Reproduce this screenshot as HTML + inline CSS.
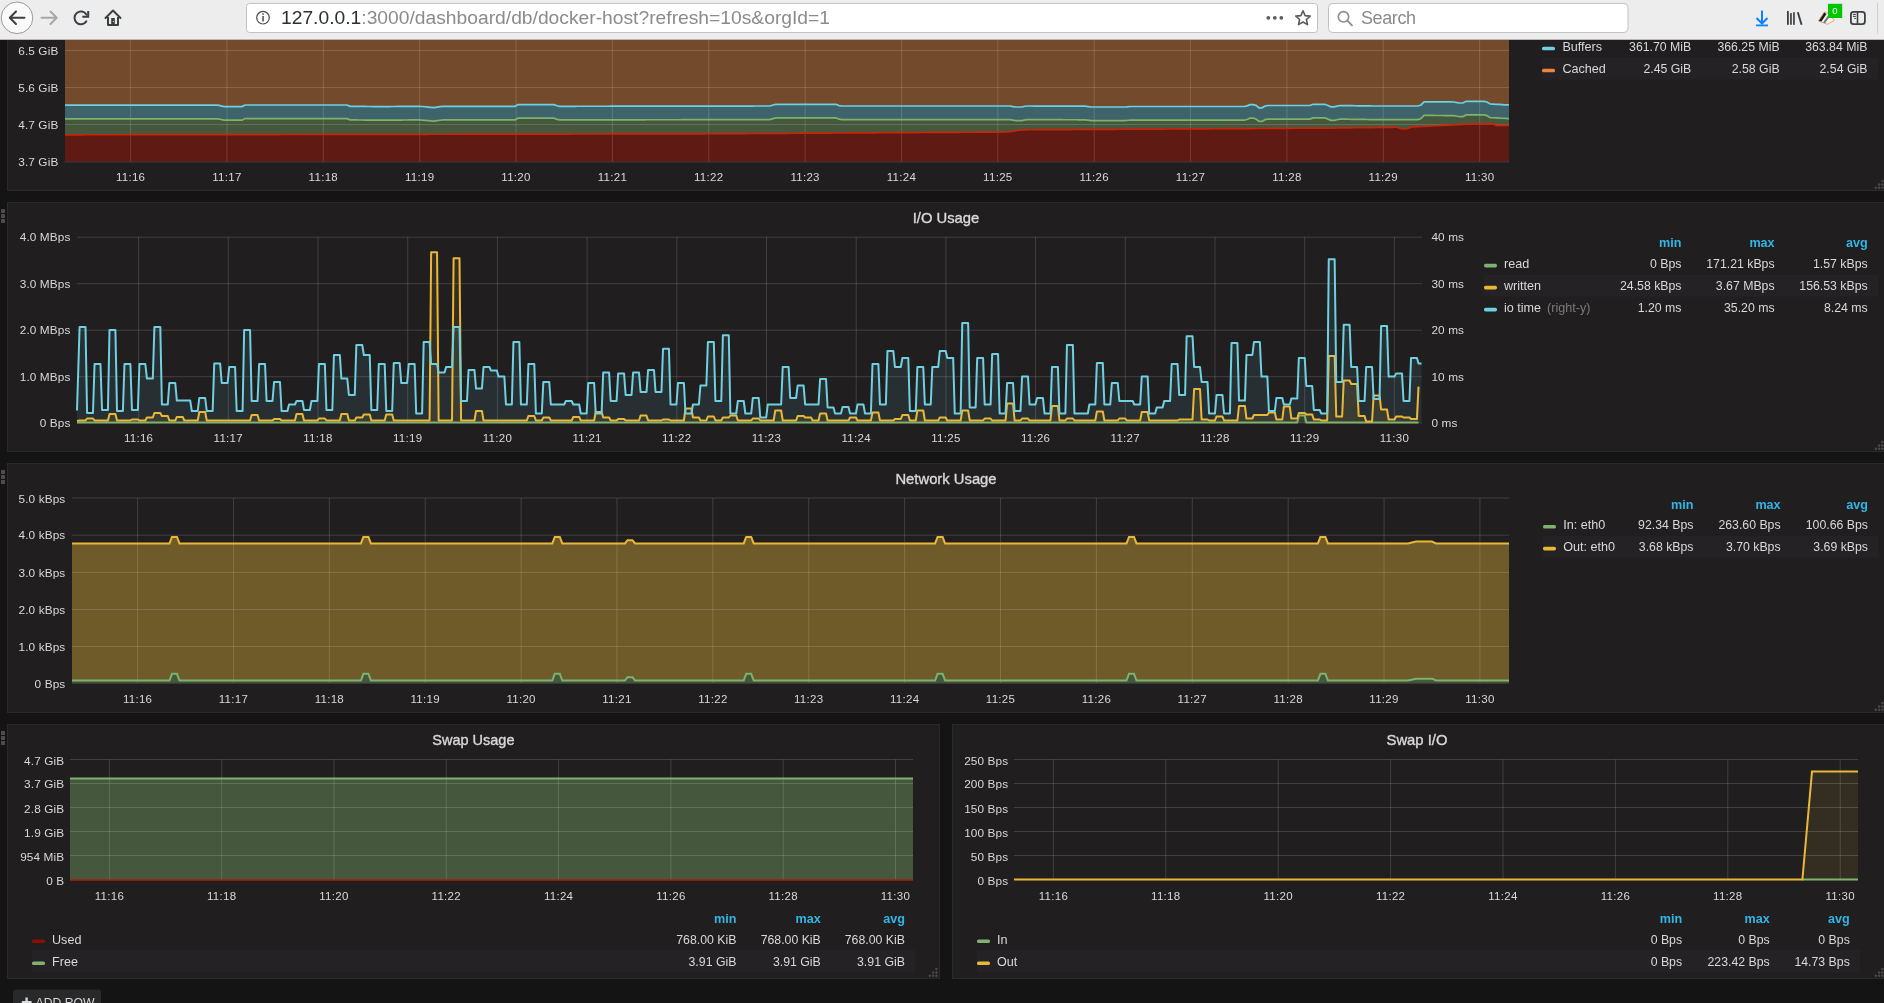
<!DOCTYPE html>
<html><head><meta charset="utf-8"><title>Grafana - Docker Host</title>
<style>
html,body{margin:0;padding:0;width:1884px;height:1003px;overflow:hidden;background:#141414;font-family:'Liberation Sans', sans-serif;}
</style></head><body>
<svg width="1884" height="963" viewBox="0 40 1884 963" style="position:absolute;left:0;top:40px;font-family:'Liberation Sans', sans-serif;will-change:transform">
<rect x="0" y="40" width="1884" height="1003" fill="#141414"/>
<rect x="7" y="-100" width="1994" height="291" fill="#2a2a2a"/>
<rect x="8" y="-99" width="1992" height="289" fill="#201e1f"/>
<circle cx="1882.4" cy="187.7" r="1.25" fill="#4a4a4a"/>
<circle cx="1879.1" cy="187.7" r="1.25" fill="#4a4a4a"/>
<circle cx="1875.8" cy="187.7" r="1.25" fill="#4a4a4a"/>
<circle cx="1882.4" cy="184.4" r="1.25" fill="#4a4a4a"/>
<circle cx="1879.1" cy="184.4" r="1.25" fill="#4a4a4a"/>
<circle cx="1882.4" cy="181.1" r="1.25" fill="#4a4a4a"/>
<rect x="65" y="40" width="1444" height="122" fill="#734a2b"/>
<polygon points="65,162 65,105.2 68,105.2 71,105.2 74,105.2 77,105.2 80,105.2 83,105.2 86,105.2 89,105.2 92,105.2 95,105.2 98,105.2 101,105.2 104,105.2 107,105.2 110,105.2 113,105.2 116,105.2 119,105.2 122,105.2 125,105.2 128,105.2 131,105.2 134,105.2 137,105.2 140,105.2 143,105.2 146,105.2 149,105.2 152,105.2 155,105.2 158,105.2 161,105.2 164,105.2 167,105.2 170,105.2 173,105.2 176,105.2 179,105.2 182,105.2 185,105.2 188,105.2 191,105.2 194,105.2 197,105.2 200,105.2 203,105.2 206,105.2 209,105.2 212,105.2 215,105.2 218,105.2 221,105.9 224,106.6 227,106.6 230,106.6 233,106.6 236,106.6 239,106.6 242,106.6 245,105 248,105 251,105 254,105 257,105 260,105 263,105 266,105 269,105 272,105 275,105 278,105 281,105 284,105 287,105 290,105 293,105 296,105 299,105 302,105 305,105 308,105 311,105 314,105 317,105 320,105 323,105 326,105 329,105 332,105 335,105 338,105 341,105 344,105 347,105 350,106.3 353,106.33 356,106.36 359,106.39 362,106.42 365,106.45 368,106.48 371,106.51 374,106.54 377,106.57 380,106.6 383,106.58 386,106.55 389,106.53 392,106.51 395,106.49 398,106.46 401,106.44 404,106.42 407,106.4 410,106.38 413,106.35 416,106.33 419,106.31 422,106.49 425,106.76 428,107.04 431,107.32 434,107.6 437,107.11 440,106.62 443,106.3 446,106.3 449,106.3 452,106.3 455,106.3 458,106.3 461,106.3 464,106.3 467,106.3 470,106.3 473,106.3 476,106.3 479,106.3 482,106.3 485,106.3 488,106.3 491,106.3 494,106.3 497,106.3 500,106.3 503,106.3 506,106.3 509,106.3 512,106.3 515,106.3 518,104.6 521,104.6 524,104.6 527,104.6 530,104.6 533,104.6 536,104.6 539,104.6 542,104.6 545,104.6 548,104.6 551,104.6 554,104.6 557,105.73 560,106.3 563,106.29 566,106.29 569,106.28 572,106.28 575,106.28 578,106.27 581,106.27 584,106.26 587,106.26 590,106.25 593,106.25 596,106.25 599,106.24 602,106.24 605,106.23 608,106.23 611,106.22 614,106.22 617,106.22 620,106.21 623,106.21 626,106.2 629,106.2 632,106.2 635,106.19 638,106.19 641,106.18 644,106.18 647,106.17 650,106.17 653,106.17 656,106.16 659,106.16 662,106.15 665,106.15 668,106.14 671,106.14 674,106.14 677,106.13 680,106.13 683,106.12 686,106.12 689,106.11 692,106.11 695,106.11 698,106.1 701,106.1 704,106.09 707,106.09 710,106.08 713,106.08 716,106.08 719,106.07 722,106.07 725,106.06 728,106.06 731,106.06 734,106.05 737,106.05 740,106.04 743,106.04 746,106.03 749,106.03 752,106.03 755,106.02 758,106.02 761,106.01 764,106.01 767,106 770,106 773,104.98 776,104.3 779,104.3 782,104.3 785,104.3 788,104.3 791,104.3 794,104.3 797,104.3 800,104.3 803,104.3 806,104.3 809,104.3 812,104.3 815,104.3 818,104.3 821,104.3 824,104.3 827,104.3 830,104.3 833,104.3 836,104.3 839,105.58 842,106 845,106 848,106 851,106 854,106 857,106 860,106 863,106 866,106 869,106 872,106 875,106 878,106 881,106 884,106 887,106 890,106 893,106 896,106 899,106 902,106 905,106 908,106 911,106 914,106 917,106 920,106 923,106 926,106 929,106 932,106 935,106 938,106 941,106 944,106 947,106 950,106 953,106 956,106 959,106 962,106 965,106 968,106 971,106 974,106 977,106 980,106 983,106 986,106 989,106 992,106 995,106 998,106 1001,106 1004,106 1007,106 1010,106 1013,106.6 1016,107 1019,107 1022,107 1025,106.25 1028,106.01 1031,106.02 1034,106.03 1037,106.04 1040,106.05 1043,106.06 1046,106.07 1049,106.08 1052,106.09 1055,106.1 1058,106.11 1061,106.12 1064,106.13 1067,106.14 1070,106.15 1073,106.16 1076,106.17 1079,106.18 1082,106.19 1085,106.2 1088,106.6 1091,107 1094,107 1097,107 1100,107 1103,107 1106,107 1109,107 1112,107 1115,107 1118,107 1121,107 1124,107 1127,106.88 1130,106.5 1133,106.5 1136,106.5 1139,106.5 1142,106.5 1145,106.5 1148,106.5 1151,106.5 1154,106.5 1157,106.5 1160,106.5 1163,106.5 1166,106.5 1169,106.5 1172,106.5 1175,106.5 1178,106.5 1181,106.5 1184,106.5 1187,106.5 1190,106.5 1193,106.5 1196,106.5 1199,106.5 1202,106.5 1205,106.5 1208,106.5 1211,106.5 1214,106.5 1217,106.5 1220,106.5 1223,106.5 1226,106.5 1229,106.5 1232,106.5 1235,106.5 1238,106.5 1241,106.5 1244,106.5 1247,105.87 1250,104.6 1253,104.6 1256,105.4 1259,107.8 1262,107.8 1265,106.08 1268,105.5 1271,105.5 1274,105.5 1277,105.5 1280,105.5 1283,105.5 1286,105.5 1289,105.5 1292,105.5 1295,105.5 1298,105.5 1301,105.5 1304,105.5 1307,105.5 1310,105.5 1313,104.3 1316,104.3 1319,104.3 1322,104.3 1325,104.3 1328,105.55 1331,106.8 1334,106.8 1337,106.15 1340,105.51 1343,105.56 1346,105.6 1349,105.65 1352,105.69 1355,105.74 1358,105.78 1361,105.82 1364,105.87 1367,105.91 1370,105.96 1373,106 1376,106 1379,106 1382,106 1385,106 1388,106 1391,106 1394,106 1397,106 1400,106 1403,106 1406,106 1409,106 1412,106 1415,106 1418,106 1421,104.95 1424,101.8 1427,101.82 1430,101.84 1433,101.86 1436,101.88 1439,101.9 1442,101.92 1445,101.94 1448,101.95 1451,101.97 1454,101.99 1457,102.67 1460,103 1463,103 1466,101.3 1469,101.3 1472,101.3 1475,101.3 1478,101.3 1481,101.3 1484,101.3 1487,101.97 1490,104 1493,104.16 1496,104.32 1499,104.47 1502,104.63 1505,104.79 1508,104.95 1509,105 1509,162" fill="#3e636b"/>
<polygon points="65,162 65,118.8 68,118.8 71,118.8 74,118.8 77,118.8 80,118.8 83,118.8 86,118.8 89,118.8 92,118.8 95,118.8 98,118.8 101,118.8 104,118.8 107,118.8 110,118.8 113,118.8 116,118.8 119,118.8 122,118.8 125,118.8 128,118.8 131,118.8 134,118.8 137,118.8 140,118.8 143,118.8 146,118.8 149,118.8 152,118.8 155,118.8 158,118.8 161,118.8 164,118.8 167,118.8 170,118.8 173,118.8 176,118.8 179,118.8 182,118.8 185,118.8 188,118.8 191,118.8 194,118.8 197,118.8 200,118.8 203,118.8 206,118.8 209,118.8 212,118.8 215,118.8 218,118.8 221,119.5 224,120.2 227,120.2 230,120.2 233,120.2 236,120.2 239,120.2 242,120.2 245,118.6 248,118.6 251,118.6 254,118.6 257,118.6 260,118.6 263,118.6 266,118.6 269,118.6 272,118.6 275,118.6 278,118.6 281,118.6 284,118.6 287,118.6 290,118.6 293,118.6 296,118.6 299,118.6 302,118.6 305,118.6 308,118.6 311,118.6 314,118.6 317,118.6 320,118.6 323,118.6 326,118.6 329,118.6 332,118.6 335,118.6 338,118.6 341,118.6 344,118.6 347,118.6 350,119.9 353,119.93 356,119.96 359,119.99 362,120.02 365,120.05 368,120.08 371,120.11 374,120.14 377,120.17 380,120.2 383,120.18 386,120.15 389,120.13 392,120.11 395,120.09 398,120.06 401,120.04 404,120.02 407,120 410,119.97 413,119.95 416,119.93 419,119.91 422,120.09 425,120.36 428,120.64 431,120.92 434,121.2 437,120.71 440,120.22 443,119.9 446,119.9 449,119.9 452,119.9 455,119.9 458,119.9 461,119.9 464,119.9 467,119.9 470,119.9 473,119.9 476,119.9 479,119.9 482,119.9 485,119.9 488,119.9 491,119.9 494,119.9 497,119.9 500,119.9 503,119.9 506,119.9 509,119.9 512,119.9 515,119.9 518,118.2 521,118.2 524,118.2 527,118.2 530,118.2 533,118.2 536,118.2 539,118.2 542,118.2 545,118.2 548,118.2 551,118.2 554,118.2 557,119.33 560,119.9 563,119.89 566,119.89 569,119.88 572,119.88 575,119.88 578,119.87 581,119.87 584,119.86 587,119.86 590,119.85 593,119.85 596,119.85 599,119.84 602,119.84 605,119.83 608,119.83 611,119.82 614,119.82 617,119.82 620,119.81 623,119.81 626,119.8 629,119.8 632,119.8 635,119.79 638,119.79 641,119.78 644,119.78 647,119.77 650,119.77 653,119.77 656,119.76 659,119.76 662,119.75 665,119.75 668,119.74 671,119.74 674,119.74 677,119.73 680,119.73 683,119.72 686,119.72 689,119.71 692,119.71 695,119.71 698,119.7 701,119.7 704,119.69 707,119.69 710,119.68 713,119.68 716,119.68 719,119.67 722,119.67 725,119.66 728,119.66 731,119.66 734,119.65 737,119.65 740,119.64 743,119.64 746,119.63 749,119.63 752,119.63 755,119.62 758,119.62 761,119.61 764,119.61 767,119.6 770,119.6 773,118.58 776,117.9 779,117.9 782,117.9 785,117.9 788,117.9 791,117.9 794,117.9 797,117.9 800,117.9 803,117.9 806,117.9 809,117.9 812,117.9 815,117.9 818,117.9 821,117.9 824,117.9 827,117.9 830,117.9 833,117.9 836,117.9 839,119.17 842,119.6 845,119.6 848,119.6 851,119.6 854,119.6 857,119.6 860,119.6 863,119.6 866,119.6 869,119.6 872,119.6 875,119.6 878,119.6 881,119.6 884,119.6 887,119.6 890,119.6 893,119.6 896,119.6 899,119.6 902,119.6 905,119.6 908,119.6 911,119.6 914,119.6 917,119.6 920,119.6 923,119.6 926,119.6 929,119.6 932,119.6 935,119.6 938,119.6 941,119.6 944,119.6 947,119.6 950,119.6 953,119.6 956,119.6 959,119.6 962,119.6 965,119.6 968,119.6 971,119.6 974,119.6 977,119.6 980,119.6 983,119.6 986,119.6 989,119.6 992,119.6 995,119.6 998,119.6 1001,119.6 1004,119.6 1007,119.6 1010,119.6 1013,120.2 1016,120.6 1019,120.6 1022,120.6 1025,119.85 1028,119.61 1031,119.62 1034,119.63 1037,119.64 1040,119.65 1043,119.66 1046,119.67 1049,119.68 1052,119.69 1055,119.7 1058,119.71 1061,119.72 1064,119.73 1067,119.74 1070,119.75 1073,119.76 1076,119.77 1079,119.78 1082,119.79 1085,119.8 1088,120.2 1091,120.6 1094,120.6 1097,120.6 1100,120.6 1103,120.6 1106,120.6 1109,120.6 1112,120.6 1115,120.6 1118,120.6 1121,120.6 1124,120.6 1127,120.47 1130,120.1 1133,120.1 1136,120.1 1139,120.1 1142,120.1 1145,120.1 1148,120.1 1151,120.1 1154,120.1 1157,120.1 1160,120.1 1163,120.1 1166,120.1 1169,120.1 1172,120.1 1175,120.1 1178,120.1 1181,120.1 1184,120.1 1187,120.1 1190,120.1 1193,120.1 1196,120.1 1199,120.1 1202,120.1 1205,120.1 1208,120.1 1211,120.1 1214,120.1 1217,120.1 1220,120.1 1223,120.1 1226,120.1 1229,120.1 1232,120.1 1235,120.1 1238,120.1 1241,120.1 1244,120.1 1247,119.47 1250,118.2 1253,118.2 1256,119 1259,121.4 1262,121.4 1265,119.67 1268,119.1 1271,119.1 1274,119.1 1277,119.1 1280,119.1 1283,119.1 1286,119.1 1289,119.1 1292,119.1 1295,119.1 1298,119.1 1301,119.1 1304,119.1 1307,119.1 1310,119.1 1313,117.9 1316,117.9 1319,117.9 1322,117.9 1325,117.9 1328,119.15 1331,120.4 1334,120.4 1337,119.75 1340,119.11 1343,119.16 1346,119.2 1349,119.25 1352,119.29 1355,119.34 1358,119.38 1361,119.42 1364,119.47 1367,119.51 1370,119.56 1373,119.6 1376,119.6 1379,119.6 1382,119.6 1385,119.6 1388,119.6 1391,119.6 1394,119.6 1397,119.6 1400,119.6 1403,119.6 1406,119.6 1409,119.6 1412,119.6 1415,119.6 1418,119.6 1421,118.55 1424,115.4 1427,115.42 1430,115.44 1433,115.46 1436,115.48 1439,115.5 1442,115.52 1445,115.54 1448,115.55 1451,115.57 1454,115.59 1457,116.27 1460,116.6 1463,116.6 1466,114.9 1469,114.9 1472,114.9 1475,114.9 1478,114.9 1481,114.9 1484,114.9 1487,115.57 1490,117.6 1493,117.76 1496,117.92 1499,118.07 1502,118.23 1505,118.39 1508,118.55 1509,118.6 1509,162" fill="#45573d"/>
<polygon points="65,162 65,134.8 68,134.8 71,134.79 74,134.79 77,134.78 80,134.78 83,134.78 86,134.77 89,134.77 92,134.77 95,134.76 98,134.76 101,134.75 104,134.75 107,134.75 110,134.74 113,134.74 116,134.73 119,134.73 122,134.73 125,134.72 128,134.72 131,134.72 134,134.71 137,134.71 140,134.7 143,134.7 146,134.7 149,134.69 152,134.69 155,134.69 158,134.68 161,134.68 164,134.67 167,134.67 170,134.67 173,134.66 176,134.66 179,134.65 182,134.65 185,134.65 188,134.64 191,134.64 194,134.64 197,134.63 200,134.63 203,134.62 206,134.62 209,134.62 212,134.61 215,134.61 218,134.6 221,134.6 224,134.6 227,134.59 230,134.59 233,134.59 236,134.58 239,134.58 242,134.57 245,134.57 248,134.57 251,134.56 254,134.56 257,134.55 260,134.55 263,134.55 266,134.54 269,134.54 272,134.54 275,134.53 278,134.53 281,134.52 284,134.52 287,134.52 290,134.51 293,134.51 296,134.51 299,134.5 302,134.5 305,134.49 308,134.49 311,134.48 314,134.48 317,134.47 320,134.47 323,134.46 326,134.45 329,134.45 332,134.44 335,134.44 338,134.43 341,134.43 344,134.42 347,134.42 350,134.41 353,134.41 356,134.4 359,134.4 362,134.39 365,134.39 368,134.38 371,134.38 374,134.37 377,134.37 380,134.36 383,134.35 386,134.35 389,134.34 392,134.34 395,134.33 398,134.33 401,134.32 404,134.32 407,134.31 410,134.31 413,134.3 416,134.3 419,134.29 422,134.29 425,134.28 428,134.28 431,134.27 434,134.27 437,134.26 440,134.25 443,134.25 446,134.24 449,134.24 452,134.23 455,134.23 458,134.22 461,134.22 464,134.21 467,134.21 470,134.2 473,134.2 476,134.19 479,134.19 482,134.18 485,134.18 488,134.17 491,134.17 494,134.16 497,134.16 500,134.15 503,134.14 506,134.14 509,134.13 512,134.13 515,134.12 518,134.12 521,134.11 524,134.11 527,134.1 530,134.1 533,134.09 536,134.09 539,134.08 542,134.08 545,134.07 548,134.07 551,134.06 554,134.06 557,134.05 560,134.05 563,134.04 566,134.03 569,134.03 572,134.02 575,134.02 578,134.01 581,134.01 584,134 587,134 590,133.99 593,133.99 596,133.98 599,133.98 602,133.97 605,133.97 608,133.96 611,133.96 614,133.95 617,133.95 620,133.94 623,133.93 626,133.93 629,133.92 632,133.92 635,133.91 638,133.91 641,133.9 644,133.9 647,133.89 650,133.89 653,133.88 656,133.88 659,133.87 662,133.87 665,133.86 668,133.86 671,133.85 674,133.85 677,133.84 680,133.84 683,133.83 686,133.82 689,133.82 692,133.81 695,133.81 698,133.8 701,133.79 704,133.78 707,133.76 710,133.74 713,133.72 716,133.71 719,133.69 722,133.67 725,133.65 728,133.64 731,133.62 734,133.6 737,133.58 740,133.57 743,133.55 746,133.53 749,133.51 752,133.5 755,133.48 758,133.46 761,133.44 764,133.43 767,133.41 770,133.39 773,133.37 776,133.36 779,133.34 782,133.32 785,133.3 788,133.29 791,133.27 794,133.25 797,133.23 800,133.22 803,133.2 806,133.18 809,133.16 812,133.15 815,133.13 818,133.11 821,133.09 824,133.08 827,133.06 830,133.04 833,133.02 836,133.01 839,132.99 842,132.97 845,132.95 848,132.94 851,132.92 854,132.9 857,132.88 860,132.86 863,132.85 866,132.83 869,132.81 872,132.79 875,132.78 878,132.76 881,132.74 884,132.72 887,132.71 890,132.69 893,132.67 896,132.65 899,132.64 902,132.62 905,132.6 908,132.58 911,132.57 914,132.55 917,132.53 920,132.51 923,132.5 926,132.48 929,132.46 932,132.44 935,132.43 938,132.41 941,132.39 944,132.37 947,132.36 950,132.34 953,132.32 956,132.3 959,132.29 962,132.27 965,132.25 968,132.23 971,132.22 974,132.2 977,132.18 980,132.16 983,132.15 986,132.13 989,132.11 992,132.09 995,132.08 998,132.06 1001,132.04 1004,132.02 1007,132.01 1010,131.69 1013,131.21 1016,130.74 1019,130.27 1022,129.8 1025,129.78 1028,129.77 1031,129.75 1034,129.73 1037,129.72 1040,129.7 1043,129.68 1046,129.67 1049,129.65 1052,129.64 1055,129.62 1058,129.6 1061,129.59 1064,129.57 1067,129.55 1070,129.54 1073,129.52 1076,129.5 1079,129.49 1082,129.47 1085,129.45 1088,129.44 1091,129.42 1094,129.41 1097,129.39 1100,129.37 1103,129.36 1106,129.34 1109,129.32 1112,129.31 1115,129.29 1118,129.27 1121,129.26 1124,129.24 1127,129.22 1130,129.21 1133,129.19 1136,129.17 1139,129.16 1142,129.14 1145,129.13 1148,129.11 1151,129.09 1154,129.08 1157,129.06 1160,129.04 1163,129.03 1166,129.01 1169,128.99 1172,128.98 1175,128.96 1178,128.94 1181,128.93 1184,128.91 1187,128.89 1190,128.88 1193,128.86 1196,128.85 1199,128.83 1202,128.81 1205,128.8 1208,128.78 1211,128.76 1214,128.75 1217,128.73 1220,128.71 1223,128.7 1226,128.68 1229,128.66 1232,128.65 1235,128.63 1238,128.62 1241,128.6 1244,128.58 1247,128.57 1250,128.55 1253,128.53 1256,128.52 1259,128.5 1262,128.48 1265,128.46 1268,128.44 1271,128.42 1274,128.41 1277,128.39 1280,128.37 1283,128.35 1286,128.33 1289,128.31 1292,128.29 1295,128.27 1298,128.25 1301,128.23 1304,128.22 1307,128.2 1310,128.18 1313,128.16 1316,128.14 1319,128.12 1322,128.1 1325,128.08 1328,128.06 1331,128.04 1334,128.03 1337,128.01 1340,127.97 1343,127.93 1346,127.89 1349,127.85 1352,127.81 1355,127.77 1358,127.73 1361,127.69 1364,127.65 1367,127.61 1370,127.57 1373,127.53 1376,127.48 1379,127.44 1382,127.4 1385,127.36 1388,127.32 1391,127.28 1394,127.24 1397,127.2 1400,128.55 1403,129 1406,129 1409,128 1412,126.95 1415,126.8 1418,126.65 1421,126.5 1424,126.35 1427,126.2 1430,126.05 1433,125.9 1436,125.75 1439,125.6 1442,125.45 1445,125.3 1448,125.15 1451,125 1454,124.85 1457,124.7 1460,124.55 1463,124.4 1466,124.25 1469,124.1 1472,123.98 1475,123.9 1478,123.83 1481,123.76 1484,123.69 1487,123.62 1490,123.55 1493,123.95 1496,125.3 1499,125.3 1502,125.3 1505,125.3 1508,125.3 1509,125.3 1509,162" fill="#5f1a14"/>
<line x1="65" y1="50.5" x2="1509" y2="50.5" stroke="rgba(255,255,255,0.15)" stroke-width="1"/>
<line x1="65" y1="87.5" x2="1509" y2="87.5" stroke="rgba(255,255,255,0.15)" stroke-width="1"/>
<line x1="65" y1="124.5" x2="1509" y2="124.5" stroke="rgba(255,255,255,0.15)" stroke-width="1"/>
<line x1="130.6" y1="40" x2="130.6" y2="162" stroke="rgba(255,255,255,0.15)" stroke-width="1"/>
<line x1="226.96" y1="40" x2="226.96" y2="162" stroke="rgba(255,255,255,0.15)" stroke-width="1"/>
<line x1="323.32" y1="40" x2="323.32" y2="162" stroke="rgba(255,255,255,0.15)" stroke-width="1"/>
<line x1="419.68" y1="40" x2="419.68" y2="162" stroke="rgba(255,255,255,0.15)" stroke-width="1"/>
<line x1="516.04" y1="40" x2="516.04" y2="162" stroke="rgba(255,255,255,0.15)" stroke-width="1"/>
<line x1="612.4" y1="40" x2="612.4" y2="162" stroke="rgba(255,255,255,0.15)" stroke-width="1"/>
<line x1="708.76" y1="40" x2="708.76" y2="162" stroke="rgba(255,255,255,0.15)" stroke-width="1"/>
<line x1="805.12" y1="40" x2="805.12" y2="162" stroke="rgba(255,255,255,0.15)" stroke-width="1"/>
<line x1="901.48" y1="40" x2="901.48" y2="162" stroke="rgba(255,255,255,0.15)" stroke-width="1"/>
<line x1="997.84" y1="40" x2="997.84" y2="162" stroke="rgba(255,255,255,0.15)" stroke-width="1"/>
<line x1="1094.2" y1="40" x2="1094.2" y2="162" stroke="rgba(255,255,255,0.15)" stroke-width="1"/>
<line x1="1190.56" y1="40" x2="1190.56" y2="162" stroke="rgba(255,255,255,0.15)" stroke-width="1"/>
<line x1="1286.92" y1="40" x2="1286.92" y2="162" stroke="rgba(255,255,255,0.15)" stroke-width="1"/>
<line x1="1383.28" y1="40" x2="1383.28" y2="162" stroke="rgba(255,255,255,0.15)" stroke-width="1"/>
<line x1="1479.64" y1="40" x2="1479.64" y2="162" stroke="rgba(255,255,255,0.15)" stroke-width="1"/>
<line x1="64" y1="162" x2="1509" y2="162" stroke="#3a3a3a" stroke-width="1"/>
<polyline points="65,105.2 68,105.2 71,105.2 74,105.2 77,105.2 80,105.2 83,105.2 86,105.2 89,105.2 92,105.2 95,105.2 98,105.2 101,105.2 104,105.2 107,105.2 110,105.2 113,105.2 116,105.2 119,105.2 122,105.2 125,105.2 128,105.2 131,105.2 134,105.2 137,105.2 140,105.2 143,105.2 146,105.2 149,105.2 152,105.2 155,105.2 158,105.2 161,105.2 164,105.2 167,105.2 170,105.2 173,105.2 176,105.2 179,105.2 182,105.2 185,105.2 188,105.2 191,105.2 194,105.2 197,105.2 200,105.2 203,105.2 206,105.2 209,105.2 212,105.2 215,105.2 218,105.2 221,105.9 224,106.6 227,106.6 230,106.6 233,106.6 236,106.6 239,106.6 242,106.6 245,105 248,105 251,105 254,105 257,105 260,105 263,105 266,105 269,105 272,105 275,105 278,105 281,105 284,105 287,105 290,105 293,105 296,105 299,105 302,105 305,105 308,105 311,105 314,105 317,105 320,105 323,105 326,105 329,105 332,105 335,105 338,105 341,105 344,105 347,105 350,106.3 353,106.33 356,106.36 359,106.39 362,106.42 365,106.45 368,106.48 371,106.51 374,106.54 377,106.57 380,106.6 383,106.58 386,106.55 389,106.53 392,106.51 395,106.49 398,106.46 401,106.44 404,106.42 407,106.4 410,106.38 413,106.35 416,106.33 419,106.31 422,106.49 425,106.76 428,107.04 431,107.32 434,107.6 437,107.11 440,106.62 443,106.3 446,106.3 449,106.3 452,106.3 455,106.3 458,106.3 461,106.3 464,106.3 467,106.3 470,106.3 473,106.3 476,106.3 479,106.3 482,106.3 485,106.3 488,106.3 491,106.3 494,106.3 497,106.3 500,106.3 503,106.3 506,106.3 509,106.3 512,106.3 515,106.3 518,104.6 521,104.6 524,104.6 527,104.6 530,104.6 533,104.6 536,104.6 539,104.6 542,104.6 545,104.6 548,104.6 551,104.6 554,104.6 557,105.73 560,106.3 563,106.29 566,106.29 569,106.28 572,106.28 575,106.28 578,106.27 581,106.27 584,106.26 587,106.26 590,106.25 593,106.25 596,106.25 599,106.24 602,106.24 605,106.23 608,106.23 611,106.22 614,106.22 617,106.22 620,106.21 623,106.21 626,106.2 629,106.2 632,106.2 635,106.19 638,106.19 641,106.18 644,106.18 647,106.17 650,106.17 653,106.17 656,106.16 659,106.16 662,106.15 665,106.15 668,106.14 671,106.14 674,106.14 677,106.13 680,106.13 683,106.12 686,106.12 689,106.11 692,106.11 695,106.11 698,106.1 701,106.1 704,106.09 707,106.09 710,106.08 713,106.08 716,106.08 719,106.07 722,106.07 725,106.06 728,106.06 731,106.06 734,106.05 737,106.05 740,106.04 743,106.04 746,106.03 749,106.03 752,106.03 755,106.02 758,106.02 761,106.01 764,106.01 767,106 770,106 773,104.98 776,104.3 779,104.3 782,104.3 785,104.3 788,104.3 791,104.3 794,104.3 797,104.3 800,104.3 803,104.3 806,104.3 809,104.3 812,104.3 815,104.3 818,104.3 821,104.3 824,104.3 827,104.3 830,104.3 833,104.3 836,104.3 839,105.58 842,106 845,106 848,106 851,106 854,106 857,106 860,106 863,106 866,106 869,106 872,106 875,106 878,106 881,106 884,106 887,106 890,106 893,106 896,106 899,106 902,106 905,106 908,106 911,106 914,106 917,106 920,106 923,106 926,106 929,106 932,106 935,106 938,106 941,106 944,106 947,106 950,106 953,106 956,106 959,106 962,106 965,106 968,106 971,106 974,106 977,106 980,106 983,106 986,106 989,106 992,106 995,106 998,106 1001,106 1004,106 1007,106 1010,106 1013,106.6 1016,107 1019,107 1022,107 1025,106.25 1028,106.01 1031,106.02 1034,106.03 1037,106.04 1040,106.05 1043,106.06 1046,106.07 1049,106.08 1052,106.09 1055,106.1 1058,106.11 1061,106.12 1064,106.13 1067,106.14 1070,106.15 1073,106.16 1076,106.17 1079,106.18 1082,106.19 1085,106.2 1088,106.6 1091,107 1094,107 1097,107 1100,107 1103,107 1106,107 1109,107 1112,107 1115,107 1118,107 1121,107 1124,107 1127,106.88 1130,106.5 1133,106.5 1136,106.5 1139,106.5 1142,106.5 1145,106.5 1148,106.5 1151,106.5 1154,106.5 1157,106.5 1160,106.5 1163,106.5 1166,106.5 1169,106.5 1172,106.5 1175,106.5 1178,106.5 1181,106.5 1184,106.5 1187,106.5 1190,106.5 1193,106.5 1196,106.5 1199,106.5 1202,106.5 1205,106.5 1208,106.5 1211,106.5 1214,106.5 1217,106.5 1220,106.5 1223,106.5 1226,106.5 1229,106.5 1232,106.5 1235,106.5 1238,106.5 1241,106.5 1244,106.5 1247,105.87 1250,104.6 1253,104.6 1256,105.4 1259,107.8 1262,107.8 1265,106.08 1268,105.5 1271,105.5 1274,105.5 1277,105.5 1280,105.5 1283,105.5 1286,105.5 1289,105.5 1292,105.5 1295,105.5 1298,105.5 1301,105.5 1304,105.5 1307,105.5 1310,105.5 1313,104.3 1316,104.3 1319,104.3 1322,104.3 1325,104.3 1328,105.55 1331,106.8 1334,106.8 1337,106.15 1340,105.51 1343,105.56 1346,105.6 1349,105.65 1352,105.69 1355,105.74 1358,105.78 1361,105.82 1364,105.87 1367,105.91 1370,105.96 1373,106 1376,106 1379,106 1382,106 1385,106 1388,106 1391,106 1394,106 1397,106 1400,106 1403,106 1406,106 1409,106 1412,106 1415,106 1418,106 1421,104.95 1424,101.8 1427,101.82 1430,101.84 1433,101.86 1436,101.88 1439,101.9 1442,101.92 1445,101.94 1448,101.95 1451,101.97 1454,101.99 1457,102.67 1460,103 1463,103 1466,101.3 1469,101.3 1472,101.3 1475,101.3 1478,101.3 1481,101.3 1484,101.3 1487,101.97 1490,104 1493,104.16 1496,104.32 1499,104.47 1502,104.63 1505,104.79 1508,104.95 1509,105" fill="none" stroke="#6ed0e0" stroke-width="1.7"/>
<polyline points="65,118.8 68,118.8 71,118.8 74,118.8 77,118.8 80,118.8 83,118.8 86,118.8 89,118.8 92,118.8 95,118.8 98,118.8 101,118.8 104,118.8 107,118.8 110,118.8 113,118.8 116,118.8 119,118.8 122,118.8 125,118.8 128,118.8 131,118.8 134,118.8 137,118.8 140,118.8 143,118.8 146,118.8 149,118.8 152,118.8 155,118.8 158,118.8 161,118.8 164,118.8 167,118.8 170,118.8 173,118.8 176,118.8 179,118.8 182,118.8 185,118.8 188,118.8 191,118.8 194,118.8 197,118.8 200,118.8 203,118.8 206,118.8 209,118.8 212,118.8 215,118.8 218,118.8 221,119.5 224,120.2 227,120.2 230,120.2 233,120.2 236,120.2 239,120.2 242,120.2 245,118.6 248,118.6 251,118.6 254,118.6 257,118.6 260,118.6 263,118.6 266,118.6 269,118.6 272,118.6 275,118.6 278,118.6 281,118.6 284,118.6 287,118.6 290,118.6 293,118.6 296,118.6 299,118.6 302,118.6 305,118.6 308,118.6 311,118.6 314,118.6 317,118.6 320,118.6 323,118.6 326,118.6 329,118.6 332,118.6 335,118.6 338,118.6 341,118.6 344,118.6 347,118.6 350,119.9 353,119.93 356,119.96 359,119.99 362,120.02 365,120.05 368,120.08 371,120.11 374,120.14 377,120.17 380,120.2 383,120.18 386,120.15 389,120.13 392,120.11 395,120.09 398,120.06 401,120.04 404,120.02 407,120 410,119.97 413,119.95 416,119.93 419,119.91 422,120.09 425,120.36 428,120.64 431,120.92 434,121.2 437,120.71 440,120.22 443,119.9 446,119.9 449,119.9 452,119.9 455,119.9 458,119.9 461,119.9 464,119.9 467,119.9 470,119.9 473,119.9 476,119.9 479,119.9 482,119.9 485,119.9 488,119.9 491,119.9 494,119.9 497,119.9 500,119.9 503,119.9 506,119.9 509,119.9 512,119.9 515,119.9 518,118.2 521,118.2 524,118.2 527,118.2 530,118.2 533,118.2 536,118.2 539,118.2 542,118.2 545,118.2 548,118.2 551,118.2 554,118.2 557,119.33 560,119.9 563,119.89 566,119.89 569,119.88 572,119.88 575,119.88 578,119.87 581,119.87 584,119.86 587,119.86 590,119.85 593,119.85 596,119.85 599,119.84 602,119.84 605,119.83 608,119.83 611,119.82 614,119.82 617,119.82 620,119.81 623,119.81 626,119.8 629,119.8 632,119.8 635,119.79 638,119.79 641,119.78 644,119.78 647,119.77 650,119.77 653,119.77 656,119.76 659,119.76 662,119.75 665,119.75 668,119.74 671,119.74 674,119.74 677,119.73 680,119.73 683,119.72 686,119.72 689,119.71 692,119.71 695,119.71 698,119.7 701,119.7 704,119.69 707,119.69 710,119.68 713,119.68 716,119.68 719,119.67 722,119.67 725,119.66 728,119.66 731,119.66 734,119.65 737,119.65 740,119.64 743,119.64 746,119.63 749,119.63 752,119.63 755,119.62 758,119.62 761,119.61 764,119.61 767,119.6 770,119.6 773,118.58 776,117.9 779,117.9 782,117.9 785,117.9 788,117.9 791,117.9 794,117.9 797,117.9 800,117.9 803,117.9 806,117.9 809,117.9 812,117.9 815,117.9 818,117.9 821,117.9 824,117.9 827,117.9 830,117.9 833,117.9 836,117.9 839,119.17 842,119.6 845,119.6 848,119.6 851,119.6 854,119.6 857,119.6 860,119.6 863,119.6 866,119.6 869,119.6 872,119.6 875,119.6 878,119.6 881,119.6 884,119.6 887,119.6 890,119.6 893,119.6 896,119.6 899,119.6 902,119.6 905,119.6 908,119.6 911,119.6 914,119.6 917,119.6 920,119.6 923,119.6 926,119.6 929,119.6 932,119.6 935,119.6 938,119.6 941,119.6 944,119.6 947,119.6 950,119.6 953,119.6 956,119.6 959,119.6 962,119.6 965,119.6 968,119.6 971,119.6 974,119.6 977,119.6 980,119.6 983,119.6 986,119.6 989,119.6 992,119.6 995,119.6 998,119.6 1001,119.6 1004,119.6 1007,119.6 1010,119.6 1013,120.2 1016,120.6 1019,120.6 1022,120.6 1025,119.85 1028,119.61 1031,119.62 1034,119.63 1037,119.64 1040,119.65 1043,119.66 1046,119.67 1049,119.68 1052,119.69 1055,119.7 1058,119.71 1061,119.72 1064,119.73 1067,119.74 1070,119.75 1073,119.76 1076,119.77 1079,119.78 1082,119.79 1085,119.8 1088,120.2 1091,120.6 1094,120.6 1097,120.6 1100,120.6 1103,120.6 1106,120.6 1109,120.6 1112,120.6 1115,120.6 1118,120.6 1121,120.6 1124,120.6 1127,120.47 1130,120.1 1133,120.1 1136,120.1 1139,120.1 1142,120.1 1145,120.1 1148,120.1 1151,120.1 1154,120.1 1157,120.1 1160,120.1 1163,120.1 1166,120.1 1169,120.1 1172,120.1 1175,120.1 1178,120.1 1181,120.1 1184,120.1 1187,120.1 1190,120.1 1193,120.1 1196,120.1 1199,120.1 1202,120.1 1205,120.1 1208,120.1 1211,120.1 1214,120.1 1217,120.1 1220,120.1 1223,120.1 1226,120.1 1229,120.1 1232,120.1 1235,120.1 1238,120.1 1241,120.1 1244,120.1 1247,119.47 1250,118.2 1253,118.2 1256,119 1259,121.4 1262,121.4 1265,119.67 1268,119.1 1271,119.1 1274,119.1 1277,119.1 1280,119.1 1283,119.1 1286,119.1 1289,119.1 1292,119.1 1295,119.1 1298,119.1 1301,119.1 1304,119.1 1307,119.1 1310,119.1 1313,117.9 1316,117.9 1319,117.9 1322,117.9 1325,117.9 1328,119.15 1331,120.4 1334,120.4 1337,119.75 1340,119.11 1343,119.16 1346,119.2 1349,119.25 1352,119.29 1355,119.34 1358,119.38 1361,119.42 1364,119.47 1367,119.51 1370,119.56 1373,119.6 1376,119.6 1379,119.6 1382,119.6 1385,119.6 1388,119.6 1391,119.6 1394,119.6 1397,119.6 1400,119.6 1403,119.6 1406,119.6 1409,119.6 1412,119.6 1415,119.6 1418,119.6 1421,118.55 1424,115.4 1427,115.42 1430,115.44 1433,115.46 1436,115.48 1439,115.5 1442,115.52 1445,115.54 1448,115.55 1451,115.57 1454,115.59 1457,116.27 1460,116.6 1463,116.6 1466,114.9 1469,114.9 1472,114.9 1475,114.9 1478,114.9 1481,114.9 1484,114.9 1487,115.57 1490,117.6 1493,117.76 1496,117.92 1499,118.07 1502,118.23 1505,118.39 1508,118.55 1509,118.6" fill="none" stroke="#7eb26d" stroke-width="1.7"/>
<polyline points="65,134.8 68,134.8 71,134.79 74,134.79 77,134.78 80,134.78 83,134.78 86,134.77 89,134.77 92,134.77 95,134.76 98,134.76 101,134.75 104,134.75 107,134.75 110,134.74 113,134.74 116,134.73 119,134.73 122,134.73 125,134.72 128,134.72 131,134.72 134,134.71 137,134.71 140,134.7 143,134.7 146,134.7 149,134.69 152,134.69 155,134.69 158,134.68 161,134.68 164,134.67 167,134.67 170,134.67 173,134.66 176,134.66 179,134.65 182,134.65 185,134.65 188,134.64 191,134.64 194,134.64 197,134.63 200,134.63 203,134.62 206,134.62 209,134.62 212,134.61 215,134.61 218,134.6 221,134.6 224,134.6 227,134.59 230,134.59 233,134.59 236,134.58 239,134.58 242,134.57 245,134.57 248,134.57 251,134.56 254,134.56 257,134.55 260,134.55 263,134.55 266,134.54 269,134.54 272,134.54 275,134.53 278,134.53 281,134.52 284,134.52 287,134.52 290,134.51 293,134.51 296,134.51 299,134.5 302,134.5 305,134.49 308,134.49 311,134.48 314,134.48 317,134.47 320,134.47 323,134.46 326,134.45 329,134.45 332,134.44 335,134.44 338,134.43 341,134.43 344,134.42 347,134.42 350,134.41 353,134.41 356,134.4 359,134.4 362,134.39 365,134.39 368,134.38 371,134.38 374,134.37 377,134.37 380,134.36 383,134.35 386,134.35 389,134.34 392,134.34 395,134.33 398,134.33 401,134.32 404,134.32 407,134.31 410,134.31 413,134.3 416,134.3 419,134.29 422,134.29 425,134.28 428,134.28 431,134.27 434,134.27 437,134.26 440,134.25 443,134.25 446,134.24 449,134.24 452,134.23 455,134.23 458,134.22 461,134.22 464,134.21 467,134.21 470,134.2 473,134.2 476,134.19 479,134.19 482,134.18 485,134.18 488,134.17 491,134.17 494,134.16 497,134.16 500,134.15 503,134.14 506,134.14 509,134.13 512,134.13 515,134.12 518,134.12 521,134.11 524,134.11 527,134.1 530,134.1 533,134.09 536,134.09 539,134.08 542,134.08 545,134.07 548,134.07 551,134.06 554,134.06 557,134.05 560,134.05 563,134.04 566,134.03 569,134.03 572,134.02 575,134.02 578,134.01 581,134.01 584,134 587,134 590,133.99 593,133.99 596,133.98 599,133.98 602,133.97 605,133.97 608,133.96 611,133.96 614,133.95 617,133.95 620,133.94 623,133.93 626,133.93 629,133.92 632,133.92 635,133.91 638,133.91 641,133.9 644,133.9 647,133.89 650,133.89 653,133.88 656,133.88 659,133.87 662,133.87 665,133.86 668,133.86 671,133.85 674,133.85 677,133.84 680,133.84 683,133.83 686,133.82 689,133.82 692,133.81 695,133.81 698,133.8 701,133.79 704,133.78 707,133.76 710,133.74 713,133.72 716,133.71 719,133.69 722,133.67 725,133.65 728,133.64 731,133.62 734,133.6 737,133.58 740,133.57 743,133.55 746,133.53 749,133.51 752,133.5 755,133.48 758,133.46 761,133.44 764,133.43 767,133.41 770,133.39 773,133.37 776,133.36 779,133.34 782,133.32 785,133.3 788,133.29 791,133.27 794,133.25 797,133.23 800,133.22 803,133.2 806,133.18 809,133.16 812,133.15 815,133.13 818,133.11 821,133.09 824,133.08 827,133.06 830,133.04 833,133.02 836,133.01 839,132.99 842,132.97 845,132.95 848,132.94 851,132.92 854,132.9 857,132.88 860,132.86 863,132.85 866,132.83 869,132.81 872,132.79 875,132.78 878,132.76 881,132.74 884,132.72 887,132.71 890,132.69 893,132.67 896,132.65 899,132.64 902,132.62 905,132.6 908,132.58 911,132.57 914,132.55 917,132.53 920,132.51 923,132.5 926,132.48 929,132.46 932,132.44 935,132.43 938,132.41 941,132.39 944,132.37 947,132.36 950,132.34 953,132.32 956,132.3 959,132.29 962,132.27 965,132.25 968,132.23 971,132.22 974,132.2 977,132.18 980,132.16 983,132.15 986,132.13 989,132.11 992,132.09 995,132.08 998,132.06 1001,132.04 1004,132.02 1007,132.01 1010,131.69 1013,131.21 1016,130.74 1019,130.27 1022,129.8 1025,129.78 1028,129.77 1031,129.75 1034,129.73 1037,129.72 1040,129.7 1043,129.68 1046,129.67 1049,129.65 1052,129.64 1055,129.62 1058,129.6 1061,129.59 1064,129.57 1067,129.55 1070,129.54 1073,129.52 1076,129.5 1079,129.49 1082,129.47 1085,129.45 1088,129.44 1091,129.42 1094,129.41 1097,129.39 1100,129.37 1103,129.36 1106,129.34 1109,129.32 1112,129.31 1115,129.29 1118,129.27 1121,129.26 1124,129.24 1127,129.22 1130,129.21 1133,129.19 1136,129.17 1139,129.16 1142,129.14 1145,129.13 1148,129.11 1151,129.09 1154,129.08 1157,129.06 1160,129.04 1163,129.03 1166,129.01 1169,128.99 1172,128.98 1175,128.96 1178,128.94 1181,128.93 1184,128.91 1187,128.89 1190,128.88 1193,128.86 1196,128.85 1199,128.83 1202,128.81 1205,128.8 1208,128.78 1211,128.76 1214,128.75 1217,128.73 1220,128.71 1223,128.7 1226,128.68 1229,128.66 1232,128.65 1235,128.63 1238,128.62 1241,128.6 1244,128.58 1247,128.57 1250,128.55 1253,128.53 1256,128.52 1259,128.5 1262,128.48 1265,128.46 1268,128.44 1271,128.42 1274,128.41 1277,128.39 1280,128.37 1283,128.35 1286,128.33 1289,128.31 1292,128.29 1295,128.27 1298,128.25 1301,128.23 1304,128.22 1307,128.2 1310,128.18 1313,128.16 1316,128.14 1319,128.12 1322,128.1 1325,128.08 1328,128.06 1331,128.04 1334,128.03 1337,128.01 1340,127.97 1343,127.93 1346,127.89 1349,127.85 1352,127.81 1355,127.77 1358,127.73 1361,127.69 1364,127.65 1367,127.61 1370,127.57 1373,127.53 1376,127.48 1379,127.44 1382,127.4 1385,127.36 1388,127.32 1391,127.28 1394,127.24 1397,127.2 1400,128.55 1403,129 1406,129 1409,128 1412,126.95 1415,126.8 1418,126.65 1421,126.5 1424,126.35 1427,126.2 1430,126.05 1433,125.9 1436,125.75 1439,125.6 1442,125.45 1445,125.3 1448,125.15 1451,125 1454,124.85 1457,124.7 1460,124.55 1463,124.4 1466,124.25 1469,124.1 1472,123.98 1475,123.9 1478,123.83 1481,123.76 1484,123.69 1487,123.62 1490,123.55 1493,123.95 1496,125.3 1499,125.3 1502,125.3 1505,125.3 1508,125.3 1509,125.3" fill="none" stroke="#c8260a" stroke-width="1.7"/>
<text x="58.4" y="54.7" font-size="11.8" text-anchor="end" fill="#d8d9da" font-weight="normal" letter-spacing="0.12">6.5 GiB</text>
<text x="58.4" y="91.7" font-size="11.8" text-anchor="end" fill="#d8d9da" font-weight="normal" letter-spacing="0.12">5.6 GiB</text>
<text x="58.4" y="128.7" font-size="11.8" text-anchor="end" fill="#d8d9da" font-weight="normal" letter-spacing="0.12">4.7 GiB</text>
<text x="58.4" y="165.7" font-size="11.8" text-anchor="end" fill="#d8d9da" font-weight="normal" letter-spacing="0.12">3.7 GiB</text>
<text x="130.6" y="181" font-size="11.5" text-anchor="middle" fill="#d8d9da" font-weight="normal" letter-spacing="0.3">11:16</text>
<text x="226.96" y="181" font-size="11.5" text-anchor="middle" fill="#d8d9da" font-weight="normal" letter-spacing="0.3">11:17</text>
<text x="323.32" y="181" font-size="11.5" text-anchor="middle" fill="#d8d9da" font-weight="normal" letter-spacing="0.3">11:18</text>
<text x="419.68" y="181" font-size="11.5" text-anchor="middle" fill="#d8d9da" font-weight="normal" letter-spacing="0.3">11:19</text>
<text x="516.04" y="181" font-size="11.5" text-anchor="middle" fill="#d8d9da" font-weight="normal" letter-spacing="0.3">11:20</text>
<text x="612.4" y="181" font-size="11.5" text-anchor="middle" fill="#d8d9da" font-weight="normal" letter-spacing="0.3">11:21</text>
<text x="708.76" y="181" font-size="11.5" text-anchor="middle" fill="#d8d9da" font-weight="normal" letter-spacing="0.3">11:22</text>
<text x="805.12" y="181" font-size="11.5" text-anchor="middle" fill="#d8d9da" font-weight="normal" letter-spacing="0.3">11:23</text>
<text x="901.48" y="181" font-size="11.5" text-anchor="middle" fill="#d8d9da" font-weight="normal" letter-spacing="0.3">11:24</text>
<text x="997.84" y="181" font-size="11.5" text-anchor="middle" fill="#d8d9da" font-weight="normal" letter-spacing="0.3">11:25</text>
<text x="1094.2" y="181" font-size="11.5" text-anchor="middle" fill="#d8d9da" font-weight="normal" letter-spacing="0.3">11:26</text>
<text x="1190.56" y="181" font-size="11.5" text-anchor="middle" fill="#d8d9da" font-weight="normal" letter-spacing="0.3">11:27</text>
<text x="1286.92" y="181" font-size="11.5" text-anchor="middle" fill="#d8d9da" font-weight="normal" letter-spacing="0.3">11:28</text>
<text x="1383.28" y="181" font-size="11.5" text-anchor="middle" fill="#d8d9da" font-weight="normal" letter-spacing="0.3">11:29</text>
<text x="1479.64" y="181" font-size="11.5" text-anchor="middle" fill="#d8d9da" font-weight="normal" letter-spacing="0.3">11:30</text>
<rect x="1542" y="46.7" width="13" height="3.6" rx="1.6" fill="#6ed0e0"/>
<text x="1562.4" y="51" font-size="12.6" text-anchor="start" fill="#d8d9da" font-weight="normal" >Buffers</text>
<text x="1691.3" y="51" font-size="12.3" text-anchor="end" fill="#d8d9da" font-weight="normal" >361.70 MiB</text>
<text x="1779.6" y="51" font-size="12.3" text-anchor="end" fill="#d8d9da" font-weight="normal" >366.25 MiB</text>
<text x="1867.4" y="51" font-size="12.3" text-anchor="end" fill="#d8d9da" font-weight="normal" >363.84 MiB</text>
<rect x="1542" y="57.7" width="336" height="22" fill="#242224"/>
<rect x="1542" y="68.7" width="13" height="3.6" rx="1.6" fill="#ef843c"/>
<text x="1562.4" y="73" font-size="12.6" text-anchor="start" fill="#d8d9da" font-weight="normal" >Cached</text>
<text x="1691.3" y="73" font-size="12.3" text-anchor="end" fill="#d8d9da" font-weight="normal" >2.45 GiB</text>
<text x="1779.6" y="73" font-size="12.3" text-anchor="end" fill="#d8d9da" font-weight="normal" >2.58 GiB</text>
<text x="1867.4" y="73" font-size="12.3" text-anchor="end" fill="#d8d9da" font-weight="normal" >2.54 GiB</text>
<rect x="7" y="202" width="1994" height="250" fill="#2a2a2a"/>
<rect x="8" y="203" width="1992" height="248" fill="#201e1f"/>
<rect x="1" y="209" width="4" height="4" fill="#4d4d4d" rx="0.5"/>
<rect x="1" y="214" width="4" height="4" fill="#4d4d4d" rx="0.5"/>
<rect x="1" y="219" width="4" height="4" fill="#4d4d4d" rx="0.5"/>
<circle cx="1882.4" cy="448.7" r="1.25" fill="#4a4a4a"/>
<circle cx="1879.1" cy="448.7" r="1.25" fill="#4a4a4a"/>
<circle cx="1875.8" cy="448.7" r="1.25" fill="#4a4a4a"/>
<circle cx="1882.4" cy="445.4" r="1.25" fill="#4a4a4a"/>
<circle cx="1879.1" cy="445.4" r="1.25" fill="#4a4a4a"/>
<circle cx="1882.4" cy="442.1" r="1.25" fill="#4a4a4a"/>
<text x="946" y="222.8" font-size="14.8" text-anchor="middle" fill="#d8d9da" font-weight="normal" stroke="#d8d9da" stroke-width="0.35">I/O Usage</text>
<line x1="77" y1="237.2" x2="1422" y2="237.2" stroke="rgba(255,255,255,0.15)" stroke-width="1"/>
<line x1="77" y1="283.7" x2="1422" y2="283.7" stroke="rgba(255,255,255,0.15)" stroke-width="1"/>
<line x1="77" y1="330.2" x2="1422" y2="330.2" stroke="rgba(255,255,255,0.15)" stroke-width="1"/>
<line x1="77" y1="376.7" x2="1422" y2="376.7" stroke="rgba(255,255,255,0.15)" stroke-width="1"/>
<line x1="138.6" y1="237" x2="138.6" y2="423" stroke="rgba(255,255,255,0.15)" stroke-width="1"/>
<line x1="228.3" y1="237" x2="228.3" y2="423" stroke="rgba(255,255,255,0.15)" stroke-width="1"/>
<line x1="318" y1="237" x2="318" y2="423" stroke="rgba(255,255,255,0.15)" stroke-width="1"/>
<line x1="407.7" y1="237" x2="407.7" y2="423" stroke="rgba(255,255,255,0.15)" stroke-width="1"/>
<line x1="497.4" y1="237" x2="497.4" y2="423" stroke="rgba(255,255,255,0.15)" stroke-width="1"/>
<line x1="587.1" y1="237" x2="587.1" y2="423" stroke="rgba(255,255,255,0.15)" stroke-width="1"/>
<line x1="676.8" y1="237" x2="676.8" y2="423" stroke="rgba(255,255,255,0.15)" stroke-width="1"/>
<line x1="766.5" y1="237" x2="766.5" y2="423" stroke="rgba(255,255,255,0.15)" stroke-width="1"/>
<line x1="856.2" y1="237" x2="856.2" y2="423" stroke="rgba(255,255,255,0.15)" stroke-width="1"/>
<line x1="945.9" y1="237" x2="945.9" y2="423" stroke="rgba(255,255,255,0.15)" stroke-width="1"/>
<line x1="1035.6" y1="237" x2="1035.6" y2="423" stroke="rgba(255,255,255,0.15)" stroke-width="1"/>
<line x1="1125.3" y1="237" x2="1125.3" y2="423" stroke="rgba(255,255,255,0.15)" stroke-width="1"/>
<line x1="1215" y1="237" x2="1215" y2="423" stroke="rgba(255,255,255,0.15)" stroke-width="1"/>
<line x1="1304.7" y1="237" x2="1304.7" y2="423" stroke="rgba(255,255,255,0.15)" stroke-width="1"/>
<line x1="1394.4" y1="237" x2="1394.4" y2="423" stroke="rgba(255,255,255,0.15)" stroke-width="1"/>
<line x1="77" y1="423" x2="1422" y2="423" stroke="#3a3a3a" stroke-width="1"/>
<polygon points="77,423 77,410.5 79.6,327 85.5,327 87.08,413 92.98,413 94.56,364 100.46,364 102.04,410 107.94,410 109.52,330 115.42,330 117,411 122.9,411 124.48,364 130.38,364 131.96,410 137.86,410 139.44,364 145.34,364 146.92,378.6 152.82,378.6 154.4,327 160.3,327 161.88,404.5 167.78,404.5 169.36,383 175.26,383 176.84,400.6 182.74,400.6 184.32,400.6 190.22,400.6 191.8,411 197.7,411 199.28,398 205.18,398 206.76,411 212.66,411 214.24,363.6 220.14,363.6 221.72,383 227.62,383 229.2,367 235.1,367 236.68,411 242.58,411 244.16,330 250.06,330 251.64,401 257.54,401 259.12,364 265.02,364 266.6,401 272.5,401 274.08,382 279.98,382 281.56,411 287.46,411 289.04,404.5 294.94,404.5 296.52,401 302.42,401 304,410 309.9,410 311.48,401 317.38,401 318.96,364 324.86,364 326.44,410 332.34,410 333.92,355 339.82,355 341.4,378.6 347.3,378.6 348.88,395 354.78,395 356.36,345 362.26,345 363.84,355 369.74,355 371.32,410 377.22,410 378.8,364 384.7,364 386.28,411 392.18,411 393.76,363 399.66,363 401.24,383 407.14,383 408.72,364 414.62,364 416.2,413.5 422.1,413.5 423.68,342 429.58,342 431.16,364 437.06,364 438.64,372.6 444.54,372.6 446.12,367 452.02,367 453.6,327 459.5,327 461.08,401 466.98,401 468.56,370 474.46,370 476.04,388.6 481.94,388.6 483.52,367 489.42,367 491,370.6 496.9,370.6 498.48,376.6 504.38,376.6 505.96,404.5 511.86,404.5 513.44,342 519.34,342 520.92,404.5 526.82,404.5 528.4,364 534.3,364 535.88,413.5 541.78,413.5 543.36,382 549.26,382 550.84,404.5 556.74,404.5 558.32,404.5 564.22,404.5 565.8,401 571.7,401 573.28,404.5 579.18,404.5 580.76,413.5 586.66,413.5 588.24,383 594.14,383 595.72,413.5 601.62,413.5 603.2,372.6 609.1,372.6 610.68,401 616.58,401 618.16,373.6 624.06,373.6 625.64,395 631.54,395 633.12,372.6 639.02,372.6 640.6,392 646.5,392 648.08,370 653.98,370 655.56,392 661.46,392 663.04,348.7 668.94,348.7 670.52,404.5 676.42,404.5 678,383 683.9,383 685.48,413.5 691.38,413.5 692.96,404.5 698.86,404.5 700.44,385.6 706.34,385.6 707.92,342 713.82,342 715.4,401 721.3,401 722.88,335.3 728.78,335.3 730.36,413.5 736.26,413.5 737.84,401 743.74,401 745.32,413.5 751.22,413.5 752.8,398 758.7,398 760.28,417.5 766.18,417.5 767.76,404.5 773.66,404.5 775.24,404.5 781.14,404.5 782.72,367 788.62,367 790.2,398 796.1,398 797.68,385.6 803.58,385.6 805.16,404.5 811.06,404.5 812.64,404.5 818.54,404.5 820.12,379 826.02,379 827.6,407.5 833.5,407.5 835.08,413.5 840.98,413.5 842.56,407 848.46,407 850.04,413.5 855.94,413.5 857.52,404.5 863.42,404.5 865,413.5 870.9,413.5 872.48,364 878.38,364 879.96,404.5 885.86,404.5 887.44,351 893.34,351 894.92,367 900.82,367 902.4,358 908.3,358 909.88,411 915.78,411 917.36,367 923.26,367 924.84,404.5 930.74,404.5 932.32,367 938.22,367 939.8,351 945.7,351 947.28,358 953.18,358 954.76,413.5 960.66,413.5 962.24,323 968.14,323 969.72,407.5 975.62,407.5 977.2,358 983.1,358 984.68,404.5 990.58,404.5 992.16,354 998.06,354 999.64,413.5 1005.54,413.5 1007.12,383 1013.02,383 1014.6,411 1020.5,411 1022.08,376.6 1027.98,376.6 1029.56,404.5 1035.46,404.5 1037.04,398 1042.94,398 1044.52,413.5 1050.42,413.5 1052,367 1057.9,367 1059.48,413.5 1065.38,413.5 1066.96,345 1072.86,345 1074.44,413.5 1080.34,413.5 1081.92,413.5 1087.82,413.5 1089.4,404.5 1095.3,404.5 1096.88,363 1102.78,363 1104.36,404.5 1110.26,404.5 1111.84,383 1117.74,383 1119.32,401 1125.22,401 1126.8,401 1132.7,401 1134.28,404.5 1140.18,404.5 1141.76,376.6 1147.66,376.6 1149.24,413.5 1155.14,413.5 1156.72,407.5 1162.62,407.5 1164.2,401 1170.1,401 1171.68,364 1177.58,364 1179.16,395 1185.06,395 1186.64,336.3 1192.54,336.3 1194.12,367 1200.02,367 1201.6,382 1207.5,382 1209.08,413.5 1214.98,413.5 1216.56,395 1222.46,395 1224.04,413.5 1229.94,413.5 1231.52,343 1237.42,343 1239,400.6 1244.9,400.6 1246.48,355 1252.38,355 1253.96,342 1259.86,342 1261.44,376.6 1267.34,376.6 1268.92,411 1274.82,411 1276.4,398 1282.3,398 1283.88,404.5 1289.78,404.5 1291.36,398.6 1297.26,398.6 1298.84,358 1304.74,358 1306.32,386 1312.22,386 1313.8,410 1319.7,410 1321.28,413.5 1327.18,413.5 1328.76,259.3 1334.66,259.3 1336.24,382 1342.14,382 1343.72,324.8 1349.62,324.8 1351.2,367 1357.1,367 1358.68,401 1364.58,401 1366.16,367 1372.06,367 1373.64,399 1379.54,399 1381.12,326 1387.02,326 1388.6,376.6 1394.5,376.6 1396.08,373.6 1401.98,373.6 1403.56,401 1409.46,401 1411.04,358 1416.94,358 1418.52,363.6 1421.5,363.6 1421.5,423" fill="rgba(110,208,224,0.1)"/>
<polygon points="77,423 77,421 79.6,420.5 85.5,420.5 87.08,418.5 92.98,418.5 94.56,420.5 100.46,420.5 102.04,420.5 107.94,420.5 109.52,414 115.42,414 117,420.5 122.9,420.5 124.48,420.5 130.38,420.5 131.96,419.5 137.86,419.5 139.44,420.5 145.34,420.5 146.92,417.5 152.82,417.5 154.4,413 160.3,413 161.88,416 167.78,416 169.36,420.5 175.26,420.5 176.84,417 182.74,417 184.32,420.5 190.22,420.5 191.8,420.5 197.7,420.5 199.28,412 205.18,412 206.76,420.5 212.66,420.5 214.24,420.5 220.14,420.5 221.72,420.5 227.62,420.5 229.2,420.5 235.1,420.5 236.68,420.5 242.58,420.5 244.16,420.5 250.06,420.5 251.64,415 257.54,415 259.12,420.5 265.02,420.5 266.6,420.5 272.5,420.5 274.08,419 279.98,419 281.56,420.5 287.46,420.5 289.04,420.5 294.94,420.5 296.52,414 302.42,414 304,420.5 309.9,420.5 311.48,420.5 317.38,420.5 318.96,418.5 324.86,418.5 326.44,420.5 332.34,420.5 333.92,420.5 339.82,420.5 341.4,414 347.3,414 348.88,420.5 354.78,420.5 356.36,417.5 362.26,417.5 363.84,414.5 369.74,414.5 371.32,420.5 377.22,420.5 378.8,420.5 384.7,420.5 386.28,414.5 392.18,414.5 393.76,420.5 399.66,420.5 401.24,420.5 407.14,420.5 408.72,420.5 414.62,420.5 416.2,420.5 422.1,420.5 423.68,420.5 429.58,420.5 431.16,252.3 437.06,252.3 438.64,420.5 444.54,420.5 446.12,420.5 452.02,420.5 453.6,258.3 459.5,258.3 461.08,420.5 466.98,420.5 468.56,420.5 474.46,420.5 476.04,411 481.94,411 483.52,420.5 489.42,420.5 491,420.5 496.9,420.5 498.48,420.5 504.38,420.5 505.96,420.5 511.86,420.5 513.44,420.5 519.34,420.5 520.92,420.5 526.82,420.5 528.4,416 534.3,416 535.88,420.5 541.78,420.5 543.36,417.5 549.26,417.5 550.84,420.5 556.74,420.5 558.32,420.5 564.22,420.5 565.8,420.5 571.7,420.5 573.28,417 579.18,417 580.76,420.5 586.66,420.5 588.24,420.5 594.14,420.5 595.72,412 601.62,412 603.2,417.5 609.1,417.5 610.68,420.5 616.58,420.5 618.16,419 624.06,419 625.64,420.5 631.54,420.5 633.12,420.5 639.02,420.5 640.6,415.5 646.5,415.5 648.08,420.5 653.98,420.5 655.56,420.5 661.46,420.5 663.04,419.5 668.94,419.5 670.52,420.5 676.42,420.5 678,420.5 683.9,420.5 685.48,408.5 691.38,408.5 692.96,417.5 698.86,417.5 700.44,420.5 706.34,420.5 707.92,416.5 713.82,416.5 715.4,420.5 721.3,420.5 722.88,417.5 728.78,417.5 730.36,415.5 736.26,415.5 737.84,420.5 743.74,420.5 745.32,420.5 751.22,420.5 752.8,418.5 758.7,418.5 760.28,420.5 766.18,420.5 767.76,420.5 773.66,420.5 775.24,410.5 781.14,410.5 782.72,420.5 788.62,420.5 790.2,420.5 796.1,420.5 797.68,416 803.58,416 805.16,417.5 811.06,417.5 812.64,420.5 818.54,420.5 820.12,413.5 826.02,413.5 827.6,420.5 833.5,420.5 835.08,420.5 840.98,420.5 842.56,420.5 848.46,420.5 850.04,417.5 855.94,417.5 857.52,420.5 863.42,420.5 865,420.5 870.9,420.5 872.48,412.5 878.38,412.5 879.96,420.5 885.86,420.5 887.44,420.5 893.34,420.5 894.92,419 900.82,419 902.4,415 908.3,415 909.88,420.5 915.78,420.5 917.36,410.5 923.26,410.5 924.84,420.5 930.74,420.5 932.32,420.5 938.22,420.5 939.8,417.5 945.7,417.5 947.28,420.5 953.18,420.5 954.76,420.5 960.66,420.5 962.24,410.5 968.14,410.5 969.72,420.5 975.62,420.5 977.2,420.5 983.1,420.5 984.68,418.5 990.58,418.5 992.16,420.5 998.06,420.5 999.64,420.5 1005.54,420.5 1007.12,403.5 1013.02,403.5 1014.6,420.5 1020.5,420.5 1022.08,418.5 1027.98,418.5 1029.56,420.5 1035.46,420.5 1037.04,420.5 1042.94,420.5 1044.52,420.5 1050.42,420.5 1052,406 1057.9,406 1059.48,420.5 1065.38,420.5 1066.96,418.5 1072.86,418.5 1074.44,420.5 1080.34,420.5 1081.92,420.5 1087.82,420.5 1089.4,420.5 1095.3,420.5 1096.88,411.5 1102.78,411.5 1104.36,420.5 1110.26,420.5 1111.84,420.5 1117.74,420.5 1119.32,418.5 1125.22,418.5 1126.8,420.5 1132.7,420.5 1134.28,420.5 1140.18,420.5 1141.76,412 1147.66,412 1149.24,420.5 1155.14,420.5 1156.72,420.5 1162.62,420.5 1164.2,420.5 1170.1,420.5 1171.68,420.5 1177.58,420.5 1179.16,419.5 1185.06,419.5 1186.64,419.5 1192.54,419.5 1194.12,389 1200.02,389 1201.6,419.5 1207.5,419.5 1209.08,420.5 1214.98,420.5 1216.56,416.5 1222.46,416.5 1224.04,420.5 1229.94,420.5 1231.52,420.5 1237.42,420.5 1239,406 1244.9,406 1246.48,418.5 1252.38,418.5 1253.96,415 1259.86,415 1261.44,415 1267.34,415 1268.92,412.5 1274.82,412.5 1276.4,419.5 1282.3,419.5 1283.88,406.5 1289.78,406.5 1291.36,418.5 1297.26,418.5 1298.84,413 1304.74,413 1306.32,414.5 1312.22,414.5 1313.8,419.5 1319.7,419.5 1321.28,420.5 1327.18,420.5 1328.76,356 1334.66,356 1336.24,416.5 1342.14,416.5 1343.72,380.6 1349.62,380.6 1351.2,384 1357.1,384 1358.68,416 1364.58,416 1366.16,421.5 1372.06,421.5 1373.64,395.6 1379.54,395.6 1381.12,409.5 1387.02,409.5 1388.6,419.5 1394.5,419.5 1396.08,416.5 1401.98,416.5 1403.56,417.5 1409.46,417.5 1411.04,419 1416.94,419 1418.52,386.6 1418.52,423" fill="rgba(234,184,57,0.1)"/>
<polyline points="77,422.5 79.6,422.5 85.5,422.5 87.08,422.5 92.98,422.5 94.56,422.5 100.46,422.5 102.04,422.5 107.94,422.5 109.52,422.5 115.42,422.5 117,422.5 122.9,422.5 124.48,422.5 130.38,422.5 131.96,422.5 137.86,422.5 139.44,422.5 145.34,422.5 146.92,422.5 152.82,422.5 154.4,422.5 160.3,422.5 161.88,422.5 167.78,422.5 169.36,422.5 175.26,422.5 176.84,422.5 182.74,422.5 184.32,422.5 190.22,422.5 191.8,422.5 197.7,422.5 199.28,422.5 205.18,422.5 206.76,422.5 212.66,422.5 214.24,422.5 220.14,422.5 221.72,422.5 227.62,422.5 229.2,422.5 235.1,422.5 236.68,422.5 242.58,422.5 244.16,422.5 250.06,422.5 251.64,422.5 257.54,422.5 259.12,422.5 265.02,422.5 266.6,422.5 272.5,422.5 274.08,422.5 279.98,422.5 281.56,422.5 287.46,422.5 289.04,422.5 294.94,422.5 296.52,422.5 302.42,422.5 304,422.5 309.9,422.5 311.48,422.5 317.38,422.5 318.96,422.5 324.86,422.5 326.44,422.5 332.34,422.5 333.92,422.5 339.82,422.5 341.4,422.5 347.3,422.5 348.88,422.5 354.78,422.5 356.36,422.5 362.26,422.5 363.84,422.5 369.74,422.5 371.32,422.5 377.22,422.5 378.8,422.5 384.7,422.5 386.28,422.5 392.18,422.5 393.76,422.5 399.66,422.5 401.24,422.5 407.14,422.5 408.72,422.5 414.62,422.5 416.2,422.5 422.1,422.5 423.68,422.5 429.58,422.5 431.16,422.5 437.06,422.5 438.64,422.5 444.54,422.5 446.12,422.5 452.02,422.5 453.6,422.5 459.5,422.5 461.08,422.5 466.98,422.5 468.56,422.5 474.46,422.5 476.04,422.5 481.94,422.5 483.52,422.5 489.42,422.5 491,422.5 496.9,422.5 498.48,422.5 504.38,422.5 505.96,422.5 511.86,422.5 513.44,422.5 519.34,422.5 520.92,422.5 526.82,422.5 528.4,422.5 534.3,422.5 535.88,422.5 541.78,422.5 543.36,422.5 549.26,422.5 550.84,422.5 556.74,422.5 558.32,422.5 564.22,422.5 565.8,422.5 571.7,422.5 573.28,422.5 579.18,422.5 580.76,422.5 586.66,422.5 588.24,422.5 594.14,422.5 595.72,422.5 601.62,422.5 603.2,422.5 609.1,422.5 610.68,422.5 616.58,422.5 618.16,422.5 624.06,422.5 625.64,422.5 631.54,422.5 633.12,422.5 639.02,422.5 640.6,422.5 646.5,422.5 648.08,422.5 653.98,422.5 655.56,422.5 661.46,422.5 663.04,422.5 668.94,422.5 670.52,422.5 676.42,422.5 678,422.5 683.9,422.5 685.48,422.5 691.38,422.5 692.96,422.5 698.86,422.5 700.44,422.5 706.34,422.5 707.92,422.5 713.82,422.5 715.4,422.5 721.3,422.5 722.88,422.5 728.78,422.5 730.36,422.5 736.26,422.5 737.84,422.5 743.74,422.5 745.32,422.5 751.22,422.5 752.8,422.5 758.7,422.5 760.28,422.5 766.18,422.5 767.76,422.5 773.66,422.5 775.24,422.5 781.14,422.5 782.72,422.5 788.62,422.5 790.2,422.5 796.1,422.5 797.68,422.5 803.58,422.5 805.16,422.5 811.06,422.5 812.64,422.5 818.54,422.5 820.12,422.5 826.02,422.5 827.6,422.5 833.5,422.5 835.08,422.5 840.98,422.5 842.56,422.5 848.46,422.5 850.04,422.5 855.94,422.5 857.52,422.5 863.42,422.5 865,422.5 870.9,422.5 872.48,422.5 878.38,422.5 879.96,422.5 885.86,422.5 887.44,422.5 893.34,422.5 894.92,422.5 900.82,422.5 902.4,422.5 908.3,422.5 909.88,422.5 915.78,422.5 917.36,422.5 923.26,422.5 924.84,422.5 930.74,422.5 932.32,422.5 938.22,422.5 939.8,422.5 945.7,422.5 947.28,422.5 953.18,422.5 954.76,422.5 960.66,422.5 962.24,422.5 968.14,422.5 969.72,422.5 975.62,422.5 977.2,422.5 983.1,422.5 984.68,422.5 990.58,422.5 992.16,422.5 998.06,422.5 999.64,422.5 1005.54,422.5 1007.12,422.5 1013.02,422.5 1014.6,422.5 1020.5,422.5 1022.08,422.5 1027.98,422.5 1029.56,422.5 1035.46,422.5 1037.04,422.5 1042.94,422.5 1044.52,422.5 1050.42,422.5 1052,422.5 1057.9,422.5 1059.48,422.5 1065.38,422.5 1066.96,422.5 1072.86,422.5 1074.44,422.5 1080.34,422.5 1081.92,422.5 1087.82,422.5 1089.4,422.5 1095.3,422.5 1096.88,422.5 1102.78,422.5 1104.36,422.5 1110.26,422.5 1111.84,422.5 1117.74,422.5 1119.32,422.5 1125.22,422.5 1126.8,422.5 1132.7,422.5 1134.28,422.5 1140.18,422.5 1141.76,422.5 1147.66,422.5 1149.24,422.5 1155.14,422.5 1156.72,422.5 1162.62,422.5 1164.2,422.5 1170.1,422.5 1171.68,422.5 1177.58,422.5 1179.16,422.5 1185.06,422.5 1186.64,422.5 1192.54,422.5 1194.12,422.5 1200.02,422.5 1201.6,422.5 1207.5,422.5 1209.08,422.5 1214.98,422.5 1216.56,422.5 1222.46,422.5 1224.04,422.5 1229.94,422.5 1231.52,422.5 1237.42,422.5 1239,422.5 1244.9,422.5 1246.48,422.5 1252.38,422.5 1253.96,422.5 1259.86,422.5 1261.44,422.5 1267.34,422.5 1268.92,422.5 1274.82,422.5 1276.4,422.5 1282.3,422.5 1283.88,422.5 1289.78,422.5 1291.36,422.5 1297.26,422.5 1298.84,415.5 1304.74,415.5 1306.32,422.5 1312.22,422.5 1313.8,422.5 1319.7,422.5 1321.28,422.5 1327.18,422.5 1328.76,422.5 1334.66,422.5 1336.24,422.5 1342.14,422.5 1343.72,422.5 1349.62,422.5 1351.2,422.5 1357.1,422.5 1358.68,422.5 1364.58,422.5 1366.16,422.5 1372.06,422.5 1373.64,422.5 1379.54,422.5 1381.12,422.5 1387.02,422.5 1388.6,422.5 1394.5,422.5 1396.08,422.5 1401.98,422.5 1403.56,422.5 1409.46,422.5 1411.04,422.5 1416.94,422.5 1418.52,422.5" fill="none" stroke="#7eb26d" stroke-width="2"/>
<polyline points="77,421 79.6,420.5 85.5,420.5 87.08,418.5 92.98,418.5 94.56,420.5 100.46,420.5 102.04,420.5 107.94,420.5 109.52,414 115.42,414 117,420.5 122.9,420.5 124.48,420.5 130.38,420.5 131.96,419.5 137.86,419.5 139.44,420.5 145.34,420.5 146.92,417.5 152.82,417.5 154.4,413 160.3,413 161.88,416 167.78,416 169.36,420.5 175.26,420.5 176.84,417 182.74,417 184.32,420.5 190.22,420.5 191.8,420.5 197.7,420.5 199.28,412 205.18,412 206.76,420.5 212.66,420.5 214.24,420.5 220.14,420.5 221.72,420.5 227.62,420.5 229.2,420.5 235.1,420.5 236.68,420.5 242.58,420.5 244.16,420.5 250.06,420.5 251.64,415 257.54,415 259.12,420.5 265.02,420.5 266.6,420.5 272.5,420.5 274.08,419 279.98,419 281.56,420.5 287.46,420.5 289.04,420.5 294.94,420.5 296.52,414 302.42,414 304,420.5 309.9,420.5 311.48,420.5 317.38,420.5 318.96,418.5 324.86,418.5 326.44,420.5 332.34,420.5 333.92,420.5 339.82,420.5 341.4,414 347.3,414 348.88,420.5 354.78,420.5 356.36,417.5 362.26,417.5 363.84,414.5 369.74,414.5 371.32,420.5 377.22,420.5 378.8,420.5 384.7,420.5 386.28,414.5 392.18,414.5 393.76,420.5 399.66,420.5 401.24,420.5 407.14,420.5 408.72,420.5 414.62,420.5 416.2,420.5 422.1,420.5 423.68,420.5 429.58,420.5 431.16,252.3 437.06,252.3 438.64,420.5 444.54,420.5 446.12,420.5 452.02,420.5 453.6,258.3 459.5,258.3 461.08,420.5 466.98,420.5 468.56,420.5 474.46,420.5 476.04,411 481.94,411 483.52,420.5 489.42,420.5 491,420.5 496.9,420.5 498.48,420.5 504.38,420.5 505.96,420.5 511.86,420.5 513.44,420.5 519.34,420.5 520.92,420.5 526.82,420.5 528.4,416 534.3,416 535.88,420.5 541.78,420.5 543.36,417.5 549.26,417.5 550.84,420.5 556.74,420.5 558.32,420.5 564.22,420.5 565.8,420.5 571.7,420.5 573.28,417 579.18,417 580.76,420.5 586.66,420.5 588.24,420.5 594.14,420.5 595.72,412 601.62,412 603.2,417.5 609.1,417.5 610.68,420.5 616.58,420.5 618.16,419 624.06,419 625.64,420.5 631.54,420.5 633.12,420.5 639.02,420.5 640.6,415.5 646.5,415.5 648.08,420.5 653.98,420.5 655.56,420.5 661.46,420.5 663.04,419.5 668.94,419.5 670.52,420.5 676.42,420.5 678,420.5 683.9,420.5 685.48,408.5 691.38,408.5 692.96,417.5 698.86,417.5 700.44,420.5 706.34,420.5 707.92,416.5 713.82,416.5 715.4,420.5 721.3,420.5 722.88,417.5 728.78,417.5 730.36,415.5 736.26,415.5 737.84,420.5 743.74,420.5 745.32,420.5 751.22,420.5 752.8,418.5 758.7,418.5 760.28,420.5 766.18,420.5 767.76,420.5 773.66,420.5 775.24,410.5 781.14,410.5 782.72,420.5 788.62,420.5 790.2,420.5 796.1,420.5 797.68,416 803.58,416 805.16,417.5 811.06,417.5 812.64,420.5 818.54,420.5 820.12,413.5 826.02,413.5 827.6,420.5 833.5,420.5 835.08,420.5 840.98,420.5 842.56,420.5 848.46,420.5 850.04,417.5 855.94,417.5 857.52,420.5 863.42,420.5 865,420.5 870.9,420.5 872.48,412.5 878.38,412.5 879.96,420.5 885.86,420.5 887.44,420.5 893.34,420.5 894.92,419 900.82,419 902.4,415 908.3,415 909.88,420.5 915.78,420.5 917.36,410.5 923.26,410.5 924.84,420.5 930.74,420.5 932.32,420.5 938.22,420.5 939.8,417.5 945.7,417.5 947.28,420.5 953.18,420.5 954.76,420.5 960.66,420.5 962.24,410.5 968.14,410.5 969.72,420.5 975.62,420.5 977.2,420.5 983.1,420.5 984.68,418.5 990.58,418.5 992.16,420.5 998.06,420.5 999.64,420.5 1005.54,420.5 1007.12,403.5 1013.02,403.5 1014.6,420.5 1020.5,420.5 1022.08,418.5 1027.98,418.5 1029.56,420.5 1035.46,420.5 1037.04,420.5 1042.94,420.5 1044.52,420.5 1050.42,420.5 1052,406 1057.9,406 1059.48,420.5 1065.38,420.5 1066.96,418.5 1072.86,418.5 1074.44,420.5 1080.34,420.5 1081.92,420.5 1087.82,420.5 1089.4,420.5 1095.3,420.5 1096.88,411.5 1102.78,411.5 1104.36,420.5 1110.26,420.5 1111.84,420.5 1117.74,420.5 1119.32,418.5 1125.22,418.5 1126.8,420.5 1132.7,420.5 1134.28,420.5 1140.18,420.5 1141.76,412 1147.66,412 1149.24,420.5 1155.14,420.5 1156.72,420.5 1162.62,420.5 1164.2,420.5 1170.1,420.5 1171.68,420.5 1177.58,420.5 1179.16,419.5 1185.06,419.5 1186.64,419.5 1192.54,419.5 1194.12,389 1200.02,389 1201.6,419.5 1207.5,419.5 1209.08,420.5 1214.98,420.5 1216.56,416.5 1222.46,416.5 1224.04,420.5 1229.94,420.5 1231.52,420.5 1237.42,420.5 1239,406 1244.9,406 1246.48,418.5 1252.38,418.5 1253.96,415 1259.86,415 1261.44,415 1267.34,415 1268.92,412.5 1274.82,412.5 1276.4,419.5 1282.3,419.5 1283.88,406.5 1289.78,406.5 1291.36,418.5 1297.26,418.5 1298.84,413 1304.74,413 1306.32,414.5 1312.22,414.5 1313.8,419.5 1319.7,419.5 1321.28,420.5 1327.18,420.5 1328.76,356 1334.66,356 1336.24,416.5 1342.14,416.5 1343.72,380.6 1349.62,380.6 1351.2,384 1357.1,384 1358.68,416 1364.58,416 1366.16,421.5 1372.06,421.5 1373.64,395.6 1379.54,395.6 1381.12,409.5 1387.02,409.5 1388.6,419.5 1394.5,419.5 1396.08,416.5 1401.98,416.5 1403.56,417.5 1409.46,417.5 1411.04,419 1416.94,419 1418.52,386.6" fill="none" stroke="#eab839" stroke-width="2" stroke-linejoin="round"/>
<polyline points="77,410.5 79.6,327 85.5,327 87.08,413 92.98,413 94.56,364 100.46,364 102.04,410 107.94,410 109.52,330 115.42,330 117,411 122.9,411 124.48,364 130.38,364 131.96,410 137.86,410 139.44,364 145.34,364 146.92,378.6 152.82,378.6 154.4,327 160.3,327 161.88,404.5 167.78,404.5 169.36,383 175.26,383 176.84,400.6 182.74,400.6 184.32,400.6 190.22,400.6 191.8,411 197.7,411 199.28,398 205.18,398 206.76,411 212.66,411 214.24,363.6 220.14,363.6 221.72,383 227.62,383 229.2,367 235.1,367 236.68,411 242.58,411 244.16,330 250.06,330 251.64,401 257.54,401 259.12,364 265.02,364 266.6,401 272.5,401 274.08,382 279.98,382 281.56,411 287.46,411 289.04,404.5 294.94,404.5 296.52,401 302.42,401 304,410 309.9,410 311.48,401 317.38,401 318.96,364 324.86,364 326.44,410 332.34,410 333.92,355 339.82,355 341.4,378.6 347.3,378.6 348.88,395 354.78,395 356.36,345 362.26,345 363.84,355 369.74,355 371.32,410 377.22,410 378.8,364 384.7,364 386.28,411 392.18,411 393.76,363 399.66,363 401.24,383 407.14,383 408.72,364 414.62,364 416.2,413.5 422.1,413.5 423.68,342 429.58,342 431.16,364 437.06,364 438.64,372.6 444.54,372.6 446.12,367 452.02,367 453.6,327 459.5,327 461.08,401 466.98,401 468.56,370 474.46,370 476.04,388.6 481.94,388.6 483.52,367 489.42,367 491,370.6 496.9,370.6 498.48,376.6 504.38,376.6 505.96,404.5 511.86,404.5 513.44,342 519.34,342 520.92,404.5 526.82,404.5 528.4,364 534.3,364 535.88,413.5 541.78,413.5 543.36,382 549.26,382 550.84,404.5 556.74,404.5 558.32,404.5 564.22,404.5 565.8,401 571.7,401 573.28,404.5 579.18,404.5 580.76,413.5 586.66,413.5 588.24,383 594.14,383 595.72,413.5 601.62,413.5 603.2,372.6 609.1,372.6 610.68,401 616.58,401 618.16,373.6 624.06,373.6 625.64,395 631.54,395 633.12,372.6 639.02,372.6 640.6,392 646.5,392 648.08,370 653.98,370 655.56,392 661.46,392 663.04,348.7 668.94,348.7 670.52,404.5 676.42,404.5 678,383 683.9,383 685.48,413.5 691.38,413.5 692.96,404.5 698.86,404.5 700.44,385.6 706.34,385.6 707.92,342 713.82,342 715.4,401 721.3,401 722.88,335.3 728.78,335.3 730.36,413.5 736.26,413.5 737.84,401 743.74,401 745.32,413.5 751.22,413.5 752.8,398 758.7,398 760.28,417.5 766.18,417.5 767.76,404.5 773.66,404.5 775.24,404.5 781.14,404.5 782.72,367 788.62,367 790.2,398 796.1,398 797.68,385.6 803.58,385.6 805.16,404.5 811.06,404.5 812.64,404.5 818.54,404.5 820.12,379 826.02,379 827.6,407.5 833.5,407.5 835.08,413.5 840.98,413.5 842.56,407 848.46,407 850.04,413.5 855.94,413.5 857.52,404.5 863.42,404.5 865,413.5 870.9,413.5 872.48,364 878.38,364 879.96,404.5 885.86,404.5 887.44,351 893.34,351 894.92,367 900.82,367 902.4,358 908.3,358 909.88,411 915.78,411 917.36,367 923.26,367 924.84,404.5 930.74,404.5 932.32,367 938.22,367 939.8,351 945.7,351 947.28,358 953.18,358 954.76,413.5 960.66,413.5 962.24,323 968.14,323 969.72,407.5 975.62,407.5 977.2,358 983.1,358 984.68,404.5 990.58,404.5 992.16,354 998.06,354 999.64,413.5 1005.54,413.5 1007.12,383 1013.02,383 1014.6,411 1020.5,411 1022.08,376.6 1027.98,376.6 1029.56,404.5 1035.46,404.5 1037.04,398 1042.94,398 1044.52,413.5 1050.42,413.5 1052,367 1057.9,367 1059.48,413.5 1065.38,413.5 1066.96,345 1072.86,345 1074.44,413.5 1080.34,413.5 1081.92,413.5 1087.82,413.5 1089.4,404.5 1095.3,404.5 1096.88,363 1102.78,363 1104.36,404.5 1110.26,404.5 1111.84,383 1117.74,383 1119.32,401 1125.22,401 1126.8,401 1132.7,401 1134.28,404.5 1140.18,404.5 1141.76,376.6 1147.66,376.6 1149.24,413.5 1155.14,413.5 1156.72,407.5 1162.62,407.5 1164.2,401 1170.1,401 1171.68,364 1177.58,364 1179.16,395 1185.06,395 1186.64,336.3 1192.54,336.3 1194.12,367 1200.02,367 1201.6,382 1207.5,382 1209.08,413.5 1214.98,413.5 1216.56,395 1222.46,395 1224.04,413.5 1229.94,413.5 1231.52,343 1237.42,343 1239,400.6 1244.9,400.6 1246.48,355 1252.38,355 1253.96,342 1259.86,342 1261.44,376.6 1267.34,376.6 1268.92,411 1274.82,411 1276.4,398 1282.3,398 1283.88,404.5 1289.78,404.5 1291.36,398.6 1297.26,398.6 1298.84,358 1304.74,358 1306.32,386 1312.22,386 1313.8,410 1319.7,410 1321.28,413.5 1327.18,413.5 1328.76,259.3 1334.66,259.3 1336.24,382 1342.14,382 1343.72,324.8 1349.62,324.8 1351.2,367 1357.1,367 1358.68,401 1364.58,401 1366.16,367 1372.06,367 1373.64,399 1379.54,399 1381.12,326 1387.02,326 1388.6,376.6 1394.5,376.6 1396.08,373.6 1401.98,373.6 1403.56,401 1409.46,401 1411.04,358 1416.94,358 1418.52,363.6 1421.5,363.6" fill="none" stroke="#6ed0e0" stroke-width="2" stroke-linejoin="round"/>
<text x="70.5" y="241.3" font-size="11.8" text-anchor="end" fill="#d8d9da" font-weight="normal" letter-spacing="0.12">4.0 MBps</text>
<text x="70.5" y="288.4" font-size="11.8" text-anchor="end" fill="#d8d9da" font-weight="normal" letter-spacing="0.12">3.0 MBps</text>
<text x="70.5" y="334.4" font-size="11.8" text-anchor="end" fill="#d8d9da" font-weight="normal" letter-spacing="0.12">2.0 MBps</text>
<text x="70.5" y="381" font-size="11.8" text-anchor="end" fill="#d8d9da" font-weight="normal" letter-spacing="0.12">1.0 MBps</text>
<text x="70.5" y="427.1" font-size="11.8" text-anchor="end" fill="#d8d9da" font-weight="normal" letter-spacing="0.12">0 Bps</text>
<text x="1431.4" y="241.4" font-size="11.8" text-anchor="start" fill="#d8d9da" font-weight="normal" letter-spacing="0.12">40 ms</text>
<text x="1431.4" y="287.8" font-size="11.8" text-anchor="start" fill="#d8d9da" font-weight="normal" letter-spacing="0.12">30 ms</text>
<text x="1431.4" y="334.3" font-size="11.8" text-anchor="start" fill="#d8d9da" font-weight="normal" letter-spacing="0.12">20 ms</text>
<text x="1431.4" y="380.8" font-size="11.8" text-anchor="start" fill="#d8d9da" font-weight="normal" letter-spacing="0.12">10 ms</text>
<text x="1431.4" y="427.2" font-size="11.8" text-anchor="start" fill="#d8d9da" font-weight="normal" letter-spacing="0.12">0 ms</text>
<text x="138.6" y="442" font-size="11.5" text-anchor="middle" fill="#d8d9da" font-weight="normal" letter-spacing="0.3">11:16</text>
<text x="228.3" y="442" font-size="11.5" text-anchor="middle" fill="#d8d9da" font-weight="normal" letter-spacing="0.3">11:17</text>
<text x="318" y="442" font-size="11.5" text-anchor="middle" fill="#d8d9da" font-weight="normal" letter-spacing="0.3">11:18</text>
<text x="407.7" y="442" font-size="11.5" text-anchor="middle" fill="#d8d9da" font-weight="normal" letter-spacing="0.3">11:19</text>
<text x="497.4" y="442" font-size="11.5" text-anchor="middle" fill="#d8d9da" font-weight="normal" letter-spacing="0.3">11:20</text>
<text x="587.1" y="442" font-size="11.5" text-anchor="middle" fill="#d8d9da" font-weight="normal" letter-spacing="0.3">11:21</text>
<text x="676.8" y="442" font-size="11.5" text-anchor="middle" fill="#d8d9da" font-weight="normal" letter-spacing="0.3">11:22</text>
<text x="766.5" y="442" font-size="11.5" text-anchor="middle" fill="#d8d9da" font-weight="normal" letter-spacing="0.3">11:23</text>
<text x="856.2" y="442" font-size="11.5" text-anchor="middle" fill="#d8d9da" font-weight="normal" letter-spacing="0.3">11:24</text>
<text x="945.9" y="442" font-size="11.5" text-anchor="middle" fill="#d8d9da" font-weight="normal" letter-spacing="0.3">11:25</text>
<text x="1035.6" y="442" font-size="11.5" text-anchor="middle" fill="#d8d9da" font-weight="normal" letter-spacing="0.3">11:26</text>
<text x="1125.3" y="442" font-size="11.5" text-anchor="middle" fill="#d8d9da" font-weight="normal" letter-spacing="0.3">11:27</text>
<text x="1215" y="442" font-size="11.5" text-anchor="middle" fill="#d8d9da" font-weight="normal" letter-spacing="0.3">11:28</text>
<text x="1304.7" y="442" font-size="11.5" text-anchor="middle" fill="#d8d9da" font-weight="normal" letter-spacing="0.3">11:29</text>
<text x="1394.4" y="442" font-size="11.5" text-anchor="middle" fill="#d8d9da" font-weight="normal" letter-spacing="0.3">11:30</text>
<text x="1681.5" y="247.3" font-size="12.6" text-anchor="end" fill="#33b5e5" font-weight="bold" >min</text>
<text x="1774.6" y="247.3" font-size="12.6" text-anchor="end" fill="#33b5e5" font-weight="bold" >max</text>
<text x="1867.7" y="247.3" font-size="12.6" text-anchor="end" fill="#33b5e5" font-weight="bold" >avg</text>
<rect x="1484" y="263.8" width="13" height="3.6" rx="1.6" fill="#7eb26d"/>
<text x="1504" y="268.1" font-size="12.6" text-anchor="start" fill="#d8d9da" font-weight="normal" >read</text>
<text x="1681.5" y="268.1" font-size="12.3" text-anchor="end" fill="#d8d9da" font-weight="normal" >0 Bps</text>
<text x="1774.6" y="268.1" font-size="12.3" text-anchor="end" fill="#d8d9da" font-weight="normal" >171.21 kBps</text>
<text x="1867.7" y="268.1" font-size="12.3" text-anchor="end" fill="#d8d9da" font-weight="normal" >1.57 kBps</text>
<rect x="1484" y="274.8" width="394" height="22" fill="#242224"/>
<rect x="1484" y="285.8" width="13" height="3.6" rx="1.6" fill="#eab839"/>
<text x="1504" y="290.1" font-size="12.6" text-anchor="start" fill="#d8d9da" font-weight="normal" >written</text>
<text x="1681.5" y="290.1" font-size="12.3" text-anchor="end" fill="#d8d9da" font-weight="normal" >24.58 kBps</text>
<text x="1774.6" y="290.1" font-size="12.3" text-anchor="end" fill="#d8d9da" font-weight="normal" >3.67 MBps</text>
<text x="1867.7" y="290.1" font-size="12.3" text-anchor="end" fill="#d8d9da" font-weight="normal" >156.53 kBps</text>
<rect x="1484" y="307.8" width="13" height="3.6" rx="1.6" fill="#6ed0e0"/>
<text x="1504" y="312.1" font-size="12.6" text-anchor="start" fill="#d8d9da" font-weight="normal" >io time</text>
<text x="1547" y="312.1" font-size="12.6" fill="#7b7b7b">(right-y)</text>
<text x="1681.5" y="312.1" font-size="12.3" text-anchor="end" fill="#d8d9da" font-weight="normal" >1.20 ms</text>
<text x="1774.6" y="312.1" font-size="12.3" text-anchor="end" fill="#d8d9da" font-weight="normal" >35.20 ms</text>
<text x="1867.7" y="312.1" font-size="12.3" text-anchor="end" fill="#d8d9da" font-weight="normal" >8.24 ms</text>
<rect x="7" y="463" width="1994" height="250" fill="#2a2a2a"/>
<rect x="8" y="464" width="1992" height="248" fill="#201e1f"/>
<rect x="1" y="470" width="4" height="4" fill="#4d4d4d" rx="0.5"/>
<rect x="1" y="475" width="4" height="4" fill="#4d4d4d" rx="0.5"/>
<rect x="1" y="480" width="4" height="4" fill="#4d4d4d" rx="0.5"/>
<circle cx="1882.4" cy="709.7" r="1.25" fill="#4a4a4a"/>
<circle cx="1879.1" cy="709.7" r="1.25" fill="#4a4a4a"/>
<circle cx="1875.8" cy="709.7" r="1.25" fill="#4a4a4a"/>
<circle cx="1882.4" cy="706.4" r="1.25" fill="#4a4a4a"/>
<circle cx="1879.1" cy="706.4" r="1.25" fill="#4a4a4a"/>
<circle cx="1882.4" cy="703.1" r="1.25" fill="#4a4a4a"/>
<text x="946" y="483.8" font-size="14.8" text-anchor="middle" fill="#d8d9da" font-weight="normal" stroke="#d8d9da" stroke-width="0.35">Network Usage</text>
<polygon points="72,683.3 72,543.4 169.5,543.4 172,536.9 177,536.9 179.5,543.4 360.9,543.4 363.4,536.9 368.4,536.9 370.9,543.4 552.3,543.4 554.8,536.9 559.8,536.9 562.3,543.4 625,543.4 627.5,540.15 632.5,540.15 635,543.4 743.7,543.4 746.2,536.9 751.2,536.9 753.7,543.4 935.1,543.4 937.6,536.9 942.6,536.9 945.1,543.4 1126.5,543.4 1129,536.9 1134,536.9 1136.5,543.4 1317.9,543.4 1320.4,536.9 1325.4,536.9 1327.9,543.4 1408,543.4 1416,541.6 1432,541.6 1436,543.4 1509,543.4 1509,683.3" fill="#6f5a2a"/>
<polygon points="72,683.3 72,680.5 169.5,680.5 172,673.8 177,673.8 179.5,680.5 360.9,680.5 363.4,673.8 368.4,673.8 370.9,680.5 552.3,680.5 554.8,673.8 559.8,673.8 562.3,680.5 625,680.5 627.5,677.15 632.5,677.15 635,680.5 743.7,680.5 746.2,673.8 751.2,673.8 753.7,680.5 935.1,680.5 937.6,673.8 942.6,673.8 945.1,680.5 1126.5,680.5 1129,673.8 1134,673.8 1136.5,680.5 1317.9,680.5 1320.4,673.8 1325.4,673.8 1327.9,680.5 1408,680.5 1416,678.7 1432,678.7 1436,680.5 1509,680.5 1509,683.3" fill="#45573d"/>
<line x1="72" y1="498" x2="1509" y2="498" stroke="rgba(255,255,255,0.15)" stroke-width="1"/>
<line x1="72" y1="535.2" x2="1509" y2="535.2" stroke="rgba(255,255,255,0.15)" stroke-width="1"/>
<line x1="72" y1="572.4" x2="1509" y2="572.4" stroke="rgba(255,255,255,0.15)" stroke-width="1"/>
<line x1="72" y1="609.6" x2="1509" y2="609.6" stroke="rgba(255,255,255,0.15)" stroke-width="1"/>
<line x1="72" y1="646.6" x2="1509" y2="646.6" stroke="rgba(255,255,255,0.15)" stroke-width="1"/>
<line x1="137.6" y1="498" x2="137.6" y2="683.3" stroke="rgba(255,255,255,0.15)" stroke-width="1"/>
<line x1="233.48" y1="498" x2="233.48" y2="683.3" stroke="rgba(255,255,255,0.15)" stroke-width="1"/>
<line x1="329.36" y1="498" x2="329.36" y2="683.3" stroke="rgba(255,255,255,0.15)" stroke-width="1"/>
<line x1="425.24" y1="498" x2="425.24" y2="683.3" stroke="rgba(255,255,255,0.15)" stroke-width="1"/>
<line x1="521.12" y1="498" x2="521.12" y2="683.3" stroke="rgba(255,255,255,0.15)" stroke-width="1"/>
<line x1="617" y1="498" x2="617" y2="683.3" stroke="rgba(255,255,255,0.15)" stroke-width="1"/>
<line x1="712.88" y1="498" x2="712.88" y2="683.3" stroke="rgba(255,255,255,0.15)" stroke-width="1"/>
<line x1="808.76" y1="498" x2="808.76" y2="683.3" stroke="rgba(255,255,255,0.15)" stroke-width="1"/>
<line x1="904.64" y1="498" x2="904.64" y2="683.3" stroke="rgba(255,255,255,0.15)" stroke-width="1"/>
<line x1="1000.52" y1="498" x2="1000.52" y2="683.3" stroke="rgba(255,255,255,0.15)" stroke-width="1"/>
<line x1="1096.4" y1="498" x2="1096.4" y2="683.3" stroke="rgba(255,255,255,0.15)" stroke-width="1"/>
<line x1="1192.28" y1="498" x2="1192.28" y2="683.3" stroke="rgba(255,255,255,0.15)" stroke-width="1"/>
<line x1="1288.16" y1="498" x2="1288.16" y2="683.3" stroke="rgba(255,255,255,0.15)" stroke-width="1"/>
<line x1="1384.04" y1="498" x2="1384.04" y2="683.3" stroke="rgba(255,255,255,0.15)" stroke-width="1"/>
<line x1="1479.92" y1="498" x2="1479.92" y2="683.3" stroke="rgba(255,255,255,0.15)" stroke-width="1"/>
<line x1="72" y1="683.3" x2="1509" y2="683.3" stroke="#3a3a3a" stroke-width="1"/>
<polyline points="72,680.5 169.5,680.5 172,673.8 177,673.8 179.5,680.5 360.9,680.5 363.4,673.8 368.4,673.8 370.9,680.5 552.3,680.5 554.8,673.8 559.8,673.8 562.3,680.5 625,680.5 627.5,677.15 632.5,677.15 635,680.5 743.7,680.5 746.2,673.8 751.2,673.8 753.7,680.5 935.1,680.5 937.6,673.8 942.6,673.8 945.1,680.5 1126.5,680.5 1129,673.8 1134,673.8 1136.5,680.5 1317.9,680.5 1320.4,673.8 1325.4,673.8 1327.9,680.5 1408,680.5 1416,678.7 1432,678.7 1436,680.5 1509,680.5" fill="none" stroke="#7eb26d" stroke-width="2"/>
<polyline points="72,543.4 169.5,543.4 172,536.9 177,536.9 179.5,543.4 360.9,543.4 363.4,536.9 368.4,536.9 370.9,543.4 552.3,543.4 554.8,536.9 559.8,536.9 562.3,543.4 625,543.4 627.5,540.15 632.5,540.15 635,543.4 743.7,543.4 746.2,536.9 751.2,536.9 753.7,543.4 935.1,543.4 937.6,536.9 942.6,536.9 945.1,543.4 1126.5,543.4 1129,536.9 1134,536.9 1136.5,543.4 1317.9,543.4 1320.4,536.9 1325.4,536.9 1327.9,543.4 1408,543.4 1416,541.6 1432,541.6 1436,543.4 1509,543.4" fill="none" stroke="#eab839" stroke-width="2"/>
<text x="65.4" y="502.6" font-size="11.8" text-anchor="end" fill="#d8d9da" font-weight="normal" letter-spacing="0.12">5.0 kBps</text>
<text x="65.4" y="539.4" font-size="11.8" text-anchor="end" fill="#d8d9da" font-weight="normal" letter-spacing="0.12">4.0 kBps</text>
<text x="65.4" y="576.7" font-size="11.8" text-anchor="end" fill="#d8d9da" font-weight="normal" letter-spacing="0.12">3.0 kBps</text>
<text x="65.4" y="614" font-size="11.8" text-anchor="end" fill="#d8d9da" font-weight="normal" letter-spacing="0.12">2.0 kBps</text>
<text x="65.4" y="651" font-size="11.8" text-anchor="end" fill="#d8d9da" font-weight="normal" letter-spacing="0.12">1.0 kBps</text>
<text x="65.4" y="688.1" font-size="11.8" text-anchor="end" fill="#d8d9da" font-weight="normal" letter-spacing="0.12">0 Bps</text>
<text x="137.6" y="703" font-size="11.5" text-anchor="middle" fill="#d8d9da" font-weight="normal" letter-spacing="0.3">11:16</text>
<text x="233.48" y="703" font-size="11.5" text-anchor="middle" fill="#d8d9da" font-weight="normal" letter-spacing="0.3">11:17</text>
<text x="329.36" y="703" font-size="11.5" text-anchor="middle" fill="#d8d9da" font-weight="normal" letter-spacing="0.3">11:18</text>
<text x="425.24" y="703" font-size="11.5" text-anchor="middle" fill="#d8d9da" font-weight="normal" letter-spacing="0.3">11:19</text>
<text x="521.12" y="703" font-size="11.5" text-anchor="middle" fill="#d8d9da" font-weight="normal" letter-spacing="0.3">11:20</text>
<text x="617" y="703" font-size="11.5" text-anchor="middle" fill="#d8d9da" font-weight="normal" letter-spacing="0.3">11:21</text>
<text x="712.88" y="703" font-size="11.5" text-anchor="middle" fill="#d8d9da" font-weight="normal" letter-spacing="0.3">11:22</text>
<text x="808.76" y="703" font-size="11.5" text-anchor="middle" fill="#d8d9da" font-weight="normal" letter-spacing="0.3">11:23</text>
<text x="904.64" y="703" font-size="11.5" text-anchor="middle" fill="#d8d9da" font-weight="normal" letter-spacing="0.3">11:24</text>
<text x="1000.52" y="703" font-size="11.5" text-anchor="middle" fill="#d8d9da" font-weight="normal" letter-spacing="0.3">11:25</text>
<text x="1096.4" y="703" font-size="11.5" text-anchor="middle" fill="#d8d9da" font-weight="normal" letter-spacing="0.3">11:26</text>
<text x="1192.28" y="703" font-size="11.5" text-anchor="middle" fill="#d8d9da" font-weight="normal" letter-spacing="0.3">11:27</text>
<text x="1288.16" y="703" font-size="11.5" text-anchor="middle" fill="#d8d9da" font-weight="normal" letter-spacing="0.3">11:28</text>
<text x="1384.04" y="703" font-size="11.5" text-anchor="middle" fill="#d8d9da" font-weight="normal" letter-spacing="0.3">11:29</text>
<text x="1479.92" y="703" font-size="11.5" text-anchor="middle" fill="#d8d9da" font-weight="normal" letter-spacing="0.3">11:30</text>
<text x="1693.5" y="509.1" font-size="12.6" text-anchor="end" fill="#33b5e5" font-weight="bold" >min</text>
<text x="1780.6" y="509.1" font-size="12.6" text-anchor="end" fill="#33b5e5" font-weight="bold" >max</text>
<text x="1868" y="509.1" font-size="12.6" text-anchor="end" fill="#33b5e5" font-weight="bold" >avg</text>
<rect x="1543" y="525" width="13" height="3.6" rx="1.6" fill="#7eb26d"/>
<text x="1563.3" y="529.3" font-size="12.6" text-anchor="start" fill="#d8d9da" font-weight="normal" >In: eth0</text>
<text x="1693.5" y="529.3" font-size="12.3" text-anchor="end" fill="#d8d9da" font-weight="normal" >92.34 Bps</text>
<text x="1780.6" y="529.3" font-size="12.3" text-anchor="end" fill="#d8d9da" font-weight="normal" >263.60 Bps</text>
<text x="1868" y="529.3" font-size="12.3" text-anchor="end" fill="#d8d9da" font-weight="normal" >100.66 Bps</text>
<rect x="1543" y="535.8" width="335" height="22" fill="#242224"/>
<rect x="1543" y="546.8" width="13" height="3.6" rx="1.6" fill="#eab839"/>
<text x="1563.3" y="551.1" font-size="12.6" text-anchor="start" fill="#d8d9da" font-weight="normal" >Out: eth0</text>
<text x="1693.5" y="551.1" font-size="12.3" text-anchor="end" fill="#d8d9da" font-weight="normal" >3.68 kBps</text>
<text x="1780.6" y="551.1" font-size="12.3" text-anchor="end" fill="#d8d9da" font-weight="normal" >3.70 kBps</text>
<text x="1868" y="551.1" font-size="12.3" text-anchor="end" fill="#d8d9da" font-weight="normal" >3.69 kBps</text>
<rect x="7" y="724" width="933" height="255" fill="#2a2a2a"/>
<rect x="8" y="725" width="931" height="253" fill="#201e1f"/>
<rect x="1" y="731" width="4" height="4" fill="#4d4d4d" rx="0.5"/>
<rect x="1" y="736" width="4" height="4" fill="#4d4d4d" rx="0.5"/>
<rect x="1" y="741" width="4" height="4" fill="#4d4d4d" rx="0.5"/>
<circle cx="936.4" cy="975.7" r="1.25" fill="#4a4a4a"/>
<circle cx="933.1" cy="975.7" r="1.25" fill="#4a4a4a"/>
<circle cx="929.8" cy="975.7" r="1.25" fill="#4a4a4a"/>
<circle cx="936.4" cy="972.4" r="1.25" fill="#4a4a4a"/>
<circle cx="933.1" cy="972.4" r="1.25" fill="#4a4a4a"/>
<circle cx="936.4" cy="969.1" r="1.25" fill="#4a4a4a"/>
<text x="473.4" y="745" font-size="14.5" text-anchor="middle" fill="#d8d9da" font-weight="normal" stroke="#d8d9da" stroke-width="0.35">Swap Usage</text>
<rect x="70" y="778.4" width="843" height="101.60000000000002" fill="#45573d"/>
<line x1="70" y1="759.5" x2="913" y2="759.5" stroke="rgba(255,255,255,0.15)" stroke-width="1"/>
<line x1="70" y1="783.5" x2="913" y2="783.5" stroke="rgba(255,255,255,0.15)" stroke-width="1"/>
<line x1="70" y1="807.5" x2="913" y2="807.5" stroke="rgba(255,255,255,0.15)" stroke-width="1"/>
<line x1="70" y1="831.5" x2="913" y2="831.5" stroke="rgba(255,255,255,0.15)" stroke-width="1"/>
<line x1="70" y1="855.5" x2="913" y2="855.5" stroke="rgba(255,255,255,0.15)" stroke-width="1"/>
<line x1="109.4" y1="759.5" x2="109.4" y2="880" stroke="rgba(255,255,255,0.15)" stroke-width="1"/>
<line x1="221.7" y1="759.5" x2="221.7" y2="880" stroke="rgba(255,255,255,0.15)" stroke-width="1"/>
<line x1="334" y1="759.5" x2="334" y2="880" stroke="rgba(255,255,255,0.15)" stroke-width="1"/>
<line x1="446.3" y1="759.5" x2="446.3" y2="880" stroke="rgba(255,255,255,0.15)" stroke-width="1"/>
<line x1="558.6" y1="759.5" x2="558.6" y2="880" stroke="rgba(255,255,255,0.15)" stroke-width="1"/>
<line x1="670.9" y1="759.5" x2="670.9" y2="880" stroke="rgba(255,255,255,0.15)" stroke-width="1"/>
<line x1="783.2" y1="759.5" x2="783.2" y2="880" stroke="rgba(255,255,255,0.15)" stroke-width="1"/>
<line x1="895.5" y1="759.5" x2="895.5" y2="880" stroke="rgba(255,255,255,0.15)" stroke-width="1"/>
<line x1="70" y1="778.4" x2="913" y2="778.4" stroke="#7eb26d" stroke-width="2"/>
<line x1="70" y1="880" x2="913" y2="880" stroke="#a8200a" stroke-width="1.6"/>
<text x="64.3" y="764.5" font-size="11.8" text-anchor="end" fill="#d8d9da" font-weight="normal" letter-spacing="0.12">4.7 GiB</text>
<text x="64.3" y="788.4" font-size="11.8" text-anchor="end" fill="#d8d9da" font-weight="normal" letter-spacing="0.12">3.7 GiB</text>
<text x="64.3" y="812.5" font-size="11.8" text-anchor="end" fill="#d8d9da" font-weight="normal" letter-spacing="0.12">2.8 GiB</text>
<text x="64.3" y="836.5" font-size="11.8" text-anchor="end" fill="#d8d9da" font-weight="normal" letter-spacing="0.12">1.9 GiB</text>
<text x="64.3" y="860.5" font-size="11.8" text-anchor="end" fill="#d8d9da" font-weight="normal" letter-spacing="0.12">954 MiB</text>
<text x="64.3" y="885" font-size="11.8" text-anchor="end" fill="#d8d9da" font-weight="normal" letter-spacing="0.12">0 B</text>
<text x="109.4" y="900" font-size="11.5" text-anchor="middle" fill="#d8d9da" font-weight="normal" letter-spacing="0.3">11:16</text>
<text x="221.7" y="900" font-size="11.5" text-anchor="middle" fill="#d8d9da" font-weight="normal" letter-spacing="0.3">11:18</text>
<text x="334" y="900" font-size="11.5" text-anchor="middle" fill="#d8d9da" font-weight="normal" letter-spacing="0.3">11:20</text>
<text x="446.3" y="900" font-size="11.5" text-anchor="middle" fill="#d8d9da" font-weight="normal" letter-spacing="0.3">11:22</text>
<text x="558.6" y="900" font-size="11.5" text-anchor="middle" fill="#d8d9da" font-weight="normal" letter-spacing="0.3">11:24</text>
<text x="670.9" y="900" font-size="11.5" text-anchor="middle" fill="#d8d9da" font-weight="normal" letter-spacing="0.3">11:26</text>
<text x="783.2" y="900" font-size="11.5" text-anchor="middle" fill="#d8d9da" font-weight="normal" letter-spacing="0.3">11:28</text>
<text x="895.5" y="900" font-size="11.5" text-anchor="middle" fill="#d8d9da" font-weight="normal" letter-spacing="0.3">11:30</text>
<text x="736.4" y="922.8" font-size="12.6" text-anchor="end" fill="#33b5e5" font-weight="bold" >min</text>
<text x="820.8" y="922.8" font-size="12.6" text-anchor="end" fill="#33b5e5" font-weight="bold" >max</text>
<text x="904.9" y="922.8" font-size="12.6" text-anchor="end" fill="#33b5e5" font-weight="bold" >avg</text>
<rect x="32" y="939.5" width="13" height="3.6" rx="1.6" fill="#890f02"/>
<text x="52" y="943.8" font-size="12.6" text-anchor="start" fill="#d8d9da" font-weight="normal" >Used</text>
<text x="736.4" y="943.8" font-size="12.3" text-anchor="end" fill="#d8d9da" font-weight="normal" >768.00 KiB</text>
<text x="820.8" y="943.8" font-size="12.3" text-anchor="end" fill="#d8d9da" font-weight="normal" >768.00 KiB</text>
<text x="904.9" y="943.8" font-size="12.3" text-anchor="end" fill="#d8d9da" font-weight="normal" >768.00 KiB</text>
<rect x="32" y="950.5" width="883" height="22" fill="#242224"/>
<rect x="32" y="961.5" width="13" height="3.6" rx="1.6" fill="#7eb26d"/>
<text x="52" y="965.8" font-size="12.6" text-anchor="start" fill="#d8d9da" font-weight="normal" >Free</text>
<text x="736.4" y="965.8" font-size="12.3" text-anchor="end" fill="#d8d9da" font-weight="normal" >3.91 GiB</text>
<text x="820.8" y="965.8" font-size="12.3" text-anchor="end" fill="#d8d9da" font-weight="normal" >3.91 GiB</text>
<text x="904.9" y="965.8" font-size="12.3" text-anchor="end" fill="#d8d9da" font-weight="normal" >3.91 GiB</text>
<rect x="952" y="724" width="1049" height="255" fill="#2a2a2a"/>
<rect x="953" y="725" width="1047" height="253" fill="#201e1f"/>
<circle cx="1882.4" cy="975.7" r="1.25" fill="#4a4a4a"/>
<circle cx="1879.1" cy="975.7" r="1.25" fill="#4a4a4a"/>
<circle cx="1875.8" cy="975.7" r="1.25" fill="#4a4a4a"/>
<circle cx="1882.4" cy="972.4" r="1.25" fill="#4a4a4a"/>
<circle cx="1879.1" cy="972.4" r="1.25" fill="#4a4a4a"/>
<circle cx="1882.4" cy="969.1" r="1.25" fill="#4a4a4a"/>
<text x="1417" y="745" font-size="14.8" text-anchor="middle" fill="#d8d9da" font-weight="normal" stroke="#d8d9da" stroke-width="0.35">Swap I/O</text>
<polygon points="1802.4,880 1812,771.6 1858,771.6 1858,880" fill="rgba(234,184,57,0.1)"/>
<line x1="1014" y1="759.5" x2="1858" y2="759.5" stroke="rgba(255,255,255,0.15)" stroke-width="1"/>
<line x1="1014" y1="783.5" x2="1858" y2="783.5" stroke="rgba(255,255,255,0.15)" stroke-width="1"/>
<line x1="1014" y1="807.5" x2="1858" y2="807.5" stroke="rgba(255,255,255,0.15)" stroke-width="1"/>
<line x1="1014" y1="831.5" x2="1858" y2="831.5" stroke="rgba(255,255,255,0.15)" stroke-width="1"/>
<line x1="1014" y1="855.5" x2="1858" y2="855.5" stroke="rgba(255,255,255,0.15)" stroke-width="1"/>
<line x1="1053.4" y1="759.5" x2="1053.4" y2="880" stroke="rgba(255,255,255,0.15)" stroke-width="1"/>
<line x1="1165.8" y1="759.5" x2="1165.8" y2="880" stroke="rgba(255,255,255,0.15)" stroke-width="1"/>
<line x1="1278.2" y1="759.5" x2="1278.2" y2="880" stroke="rgba(255,255,255,0.15)" stroke-width="1"/>
<line x1="1390.6" y1="759.5" x2="1390.6" y2="880" stroke="rgba(255,255,255,0.15)" stroke-width="1"/>
<line x1="1503" y1="759.5" x2="1503" y2="880" stroke="rgba(255,255,255,0.15)" stroke-width="1"/>
<line x1="1615.4" y1="759.5" x2="1615.4" y2="880" stroke="rgba(255,255,255,0.15)" stroke-width="1"/>
<line x1="1727.8" y1="759.5" x2="1727.8" y2="880" stroke="rgba(255,255,255,0.15)" stroke-width="1"/>
<line x1="1840.2" y1="759.5" x2="1840.2" y2="880" stroke="rgba(255,255,255,0.15)" stroke-width="1"/>
<line x1="1802.4" y1="879.5" x2="1858" y2="879.5" stroke="#7eb26d" stroke-width="2"/>
<polyline points="1014,879.5 1802.4,879.5 1812,771.6 1858,771.6" fill="none" stroke="#eab839" stroke-width="2"/>
<text x="1008.3" y="764.5" font-size="11.8" text-anchor="end" fill="#d8d9da" font-weight="normal" letter-spacing="0.12">250 Bps</text>
<text x="1008.3" y="788.4" font-size="11.8" text-anchor="end" fill="#d8d9da" font-weight="normal" letter-spacing="0.12">200 Bps</text>
<text x="1008.3" y="812.5" font-size="11.8" text-anchor="end" fill="#d8d9da" font-weight="normal" letter-spacing="0.12">150 Bps</text>
<text x="1008.3" y="836.5" font-size="11.8" text-anchor="end" fill="#d8d9da" font-weight="normal" letter-spacing="0.12">100 Bps</text>
<text x="1008.3" y="860.5" font-size="11.8" text-anchor="end" fill="#d8d9da" font-weight="normal" letter-spacing="0.12">50 Bps</text>
<text x="1008.3" y="885" font-size="11.8" text-anchor="end" fill="#d8d9da" font-weight="normal" letter-spacing="0.12">0 Bps</text>
<text x="1053.4" y="900" font-size="11.5" text-anchor="middle" fill="#d8d9da" font-weight="normal" letter-spacing="0.3">11:16</text>
<text x="1165.8" y="900" font-size="11.5" text-anchor="middle" fill="#d8d9da" font-weight="normal" letter-spacing="0.3">11:18</text>
<text x="1278.2" y="900" font-size="11.5" text-anchor="middle" fill="#d8d9da" font-weight="normal" letter-spacing="0.3">11:20</text>
<text x="1390.6" y="900" font-size="11.5" text-anchor="middle" fill="#d8d9da" font-weight="normal" letter-spacing="0.3">11:22</text>
<text x="1503" y="900" font-size="11.5" text-anchor="middle" fill="#d8d9da" font-weight="normal" letter-spacing="0.3">11:24</text>
<text x="1615.4" y="900" font-size="11.5" text-anchor="middle" fill="#d8d9da" font-weight="normal" letter-spacing="0.3">11:26</text>
<text x="1727.8" y="900" font-size="11.5" text-anchor="middle" fill="#d8d9da" font-weight="normal" letter-spacing="0.3">11:28</text>
<text x="1840.2" y="900" font-size="11.5" text-anchor="middle" fill="#d8d9da" font-weight="normal" letter-spacing="0.3">11:30</text>
<text x="1682.1" y="922.8" font-size="12.6" text-anchor="end" fill="#33b5e5" font-weight="bold" >min</text>
<text x="1769.7" y="922.8" font-size="12.6" text-anchor="end" fill="#33b5e5" font-weight="bold" >max</text>
<text x="1849.8" y="922.8" font-size="12.6" text-anchor="end" fill="#33b5e5" font-weight="bold" >avg</text>
<rect x="977" y="939.5" width="13" height="3.6" rx="1.6" fill="#7eb26d"/>
<text x="997" y="943.8" font-size="12.6" text-anchor="start" fill="#d8d9da" font-weight="normal" >In</text>
<text x="1682.1" y="943.8" font-size="12.3" text-anchor="end" fill="#d8d9da" font-weight="normal" >0 Bps</text>
<text x="1769.7" y="943.8" font-size="12.3" text-anchor="end" fill="#d8d9da" font-weight="normal" >0 Bps</text>
<text x="1849.8" y="943.8" font-size="12.3" text-anchor="end" fill="#d8d9da" font-weight="normal" >0 Bps</text>
<rect x="977" y="950.5" width="883" height="22" fill="#242224"/>
<rect x="977" y="961.5" width="13" height="3.6" rx="1.6" fill="#eab839"/>
<text x="997" y="965.8" font-size="12.6" text-anchor="start" fill="#d8d9da" font-weight="normal" >Out</text>
<text x="1682.1" y="965.8" font-size="12.3" text-anchor="end" fill="#d8d9da" font-weight="normal" >0 Bps</text>
<text x="1769.7" y="965.8" font-size="12.3" text-anchor="end" fill="#d8d9da" font-weight="normal" >223.42 Bps</text>
<text x="1849.8" y="965.8" font-size="12.3" text-anchor="end" fill="#d8d9da" font-weight="normal" >14.73 Bps</text>
<rect x="13" y="989.5" width="88" height="30" rx="3" fill="#2a292a"/>
<path d="M26.6,997.5 v10 M21.8,1002.2 h9.8" stroke="#d8d9da" stroke-width="2.3"/>
<text x="35.6" y="1006.6" font-size="12.2" text-anchor="start" fill="#d8d9da" font-weight="normal" >ADD ROW</text>
</svg>

<div id="tb" style="position:absolute;left:0;top:0;width:1884px;height:39px;background:#ededed;border-bottom:1px solid #b8b8b8;">
<svg width="1884" height="39" style="position:absolute;left:0;top:0;will-change:transform">
 <circle cx="17" cy="17.8" r="15.8" fill="#fafafa" stroke="#9a9a9a" stroke-width="1"/>
 <path d="M24.5,17.8 H10.5 M16,11.5 L9.8,17.8 L16,24" fill="none" stroke="#3b3f44" stroke-width="2" stroke-linecap="round" stroke-linejoin="round"/>
 <path d="M41.5,17.8 H56 M50.5,11.5 L56.7,17.8 L50.5,24" fill="none" stroke="#a8a8a8" stroke-width="2" stroke-linecap="round" stroke-linejoin="round"/>
 <path d="M86.4,14.6 A6.4,6.4 0 1 0 86.3,21.4" fill="none" stroke="#3b3f44" stroke-width="2" stroke-linecap="round"/>
 <path d="M88.2,11 V16.8 H82.3" fill="none" stroke="#3b3f44" stroke-width="2" stroke-linejoin="miter"/>
 <path d="M105.5,18 L113,10.5 L120.5,18" fill="none" stroke="#3b3f44" stroke-width="2" stroke-linecap="round" stroke-linejoin="round"/>
 <path d="M108,17 V25 H118 V17" fill="none" stroke="#3b3f44" stroke-width="2" stroke-linejoin="round"/>
 <rect x="111.2" y="18" width="3.6" height="6.5" fill="#3b3f44"/>
 <circle cx="113.4" cy="21.5" r="0.6" fill="#dcdcdc"/>
 <rect x="246.5" y="3.5" width="1071" height="29" rx="3" fill="#ffffff" stroke="#c2c2c2"/>
 <circle cx="263" cy="17.7" r="6.3" fill="none" stroke="#4a4a4f" stroke-width="1.2"/>
 <rect x="262.3" y="16" width="1.5" height="5.5" fill="#4a4a4f"/>
 <rect x="262.3" y="13.3" width="1.5" height="1.5" fill="#4a4a4f"/>
 <circle cx="1268.3" cy="17.8" r="1.9" fill="#5a5a5f"/><circle cx="1274.8" cy="17.8" r="1.9" fill="#5a5a5f"/><circle cx="1281.3" cy="17.8" r="1.9" fill="#5a5a5f"/>
 <path d="M1303,10.8 L1305.1,15.6 L1310.2,16.1 L1306.4,19.5 L1307.5,24.6 L1303,22 L1298.5,24.6 L1299.6,19.5 L1295.8,16.1 L1300.9,15.6 Z" fill="none" stroke="#5a5a5f" stroke-width="1.6" stroke-linejoin="round"/>
 <rect x="1328.5" y="3.5" width="299.5" height="29" rx="4" fill="#ffffff" stroke="#c2c2c2"/>
 <circle cx="1343.5" cy="16.8" r="5.2" fill="none" stroke="#8a8a8f" stroke-width="1.6"/>
 <path d="M1347.3,20.6 L1352,25.3" stroke="#8a8a8f" stroke-width="1.8" stroke-linecap="round"/>
 <path d="M1762,10.5 V24 M1756.5,18 L1762,23.5 L1767.5,18" fill="none" stroke="#0a84ff" stroke-width="2"/>
 <rect x="1756" y="24.5" width="12" height="1.8" fill="#0a84ff"/>
 <rect x="1787" y="11" width="1.8" height="13.8" fill="#3b3f44"/>
 <rect x="1790.1" y="13.1" width="1.7" height="11.7" fill="#3b3f44"/>
 <rect x="1793.1" y="12.2" width="1.7" height="12.6" fill="#3b3f44"/>
 <path d="M1797.8,12.2 L1801.6,24.8" stroke="#3b3f44" stroke-width="1.9"/>
 <path d="M1818.3,21 L1824.3,12 L1829,13.5 L1834.2,20.5 L1827.5,24.2 Z" fill="#f4f4f4" stroke="#e08a3c" stroke-width="0.7"/>
 <path d="M1818.8,21 L1824.3,12.6 L1826.5,14 L1821.5,21.5 Z" fill="#1a1a1a"/>
 <path d="M1823,22.5 L1828,15.5 L1829.5,17 L1825,23.3 Z" fill="#777"/>
 <rect x="1828" y="3.8" width="14.2" height="14.2" fill="#00c800"/>
 <text x="1834.8" y="13.9" font-size="9.6" text-anchor="middle" fill="#ffffff" font-family="Liberation Sans, sans-serif">0</text>
 <rect x="1850.9" y="11.9" width="14" height="12.2" rx="2.6" fill="none" stroke="#3b3f44" stroke-width="1.8"/>
 <rect x="1856.7" y="12" width="1.6" height="12" fill="#3b3f44"/>
 <rect x="1852.9" y="13.9" width="3" height="1" fill="#3b3f44"/>
 <rect x="1852.9" y="15.9" width="3" height="1" fill="#3b3f44"/>
 <rect x="1854.2" y="17.9" width="1.7" height="1" fill="#3b3f44"/>
 <rect x="1877" y="2.5" width="1" height="31" fill="#d0d0d0"/>
</svg>
<div style="position:absolute;left:281px;top:6px;height:24px;line-height:24px;font-family:'Liberation Sans',sans-serif;font-size:19.25px;white-space:nowrap;color:#8b8b8b;"><span style="color:#2b2f34">127.0.0.1</span>:3000/dashboard/db/docker-host?refresh=10s&amp;orgId=1</div>
<div style="position:absolute;left:1361px;top:5.8px;height:24px;line-height:24px;font-family:'Liberation Sans',sans-serif;font-size:18px;letter-spacing:-0.4px;white-space:nowrap;color:#8a8a8f;">Search</div>
</div>

</body></html>
